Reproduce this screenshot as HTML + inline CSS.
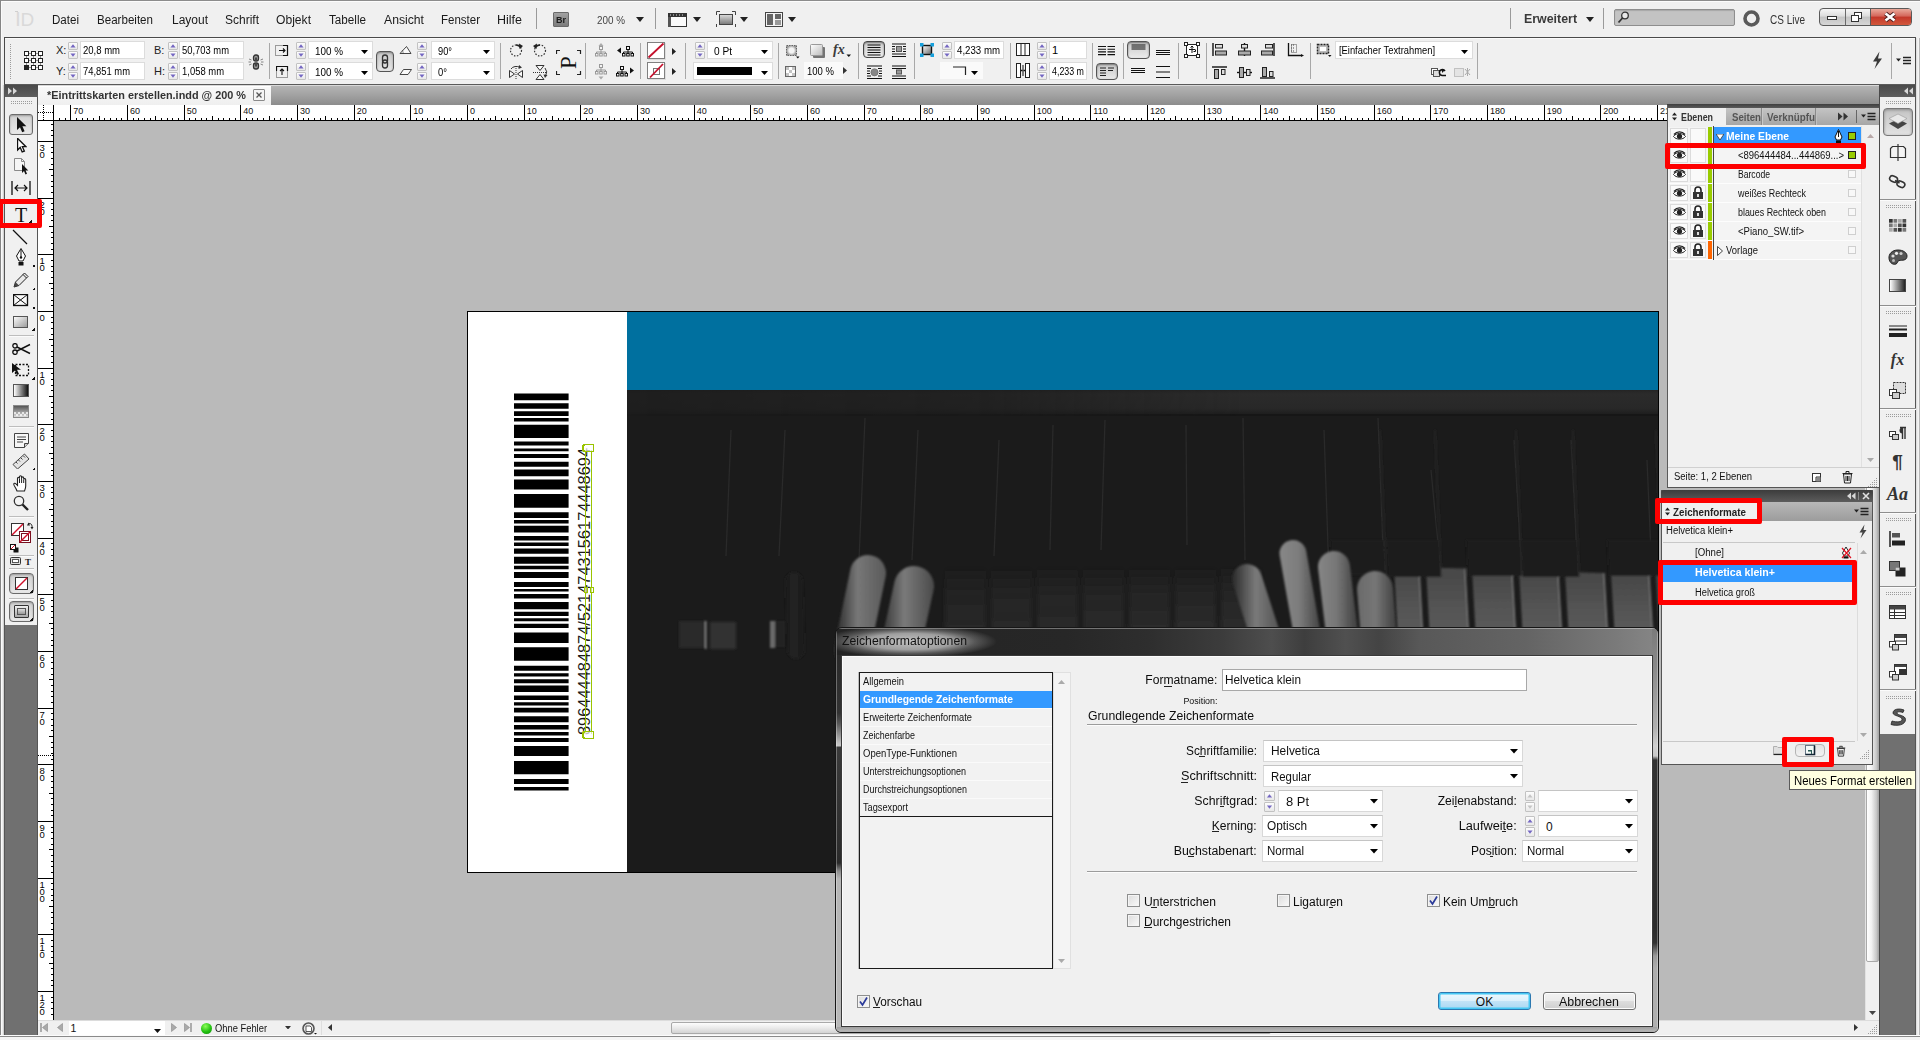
<!DOCTYPE html><html><head><meta charset="utf-8"><title>InDesign</title><style>
html,body{margin:0;padding:0;overflow:hidden;}
html{width:1920px;height:1040px;}
body{width:1920px;height:1040px;overflow:hidden;position:relative;background:#f0f0f0;font-family:"Liberation Sans",sans-serif;}
div,svg{position:absolute;}
.t{white-space:nowrap;}
</style></head><body>
<div style="left:0px;top:0px;width:1920px;height:37px;background:#f0f0f0;"></div>
<div class="t" style="left:52.00px;top:11.50px;line-height:16px;font-size:12px;color:#1a1a1a;transform:scaleX(0.9638);transform-origin:left center;">Datei</div>
<div class="t" style="left:97.00px;top:11.50px;line-height:16px;font-size:12px;color:#1a1a1a;transform:scaleX(0.9648);transform-origin:left center;">Bearbeiten</div>
<div class="t" style="left:172.00px;top:11.50px;line-height:16px;font-size:12px;color:#1a1a1a;transform:scaleX(0.9992);transform-origin:left center;">Layout</div>
<div class="t" style="left:225.00px;top:11.50px;line-height:16px;font-size:12px;color:#1a1a1a;transform:scaleX(0.9998);transform-origin:left center;">Schrift</div>
<div class="t" style="left:276.00px;top:11.50px;line-height:16px;font-size:12px;color:#1a1a1a;transform:scaleX(1.0092);transform-origin:left center;">Objekt</div>
<div class="t" style="left:329.00px;top:11.50px;line-height:16px;font-size:12px;color:#1a1a1a;transform:scaleX(0.9730);transform-origin:left center;">Tabelle</div>
<div class="t" style="left:384.00px;top:11.50px;line-height:16px;font-size:12px;color:#1a1a1a;transform:scaleX(1.0165);transform-origin:left center;">Ansicht</div>
<div class="t" style="left:441.00px;top:11.50px;line-height:16px;font-size:12px;color:#1a1a1a;transform:scaleX(0.9587);transform-origin:left center;">Fenster</div>
<div class="t" style="left:497.00px;top:11.50px;line-height:16px;font-size:12px;color:#1a1a1a;transform:scaleX(1.0414);transform-origin:left center;">Hilfe</div>
<div class="t" style="left:15.00px;top:8.00px;line-height:22px;font-size:21px;color:#d9d9d9;">I</div>
<div class="t" style="left:20.50px;top:8.50px;line-height:22px;font-size:19px;color:#d9d9d9;">D</div>
<div style="left:15px;top:11px;width:3px;height:1px;background:#cfcfcf;"></div>
<div style="left:536px;top:8px;width:1px;height:21px;background:#9a9a9a;"></div>
<div style="left:553px;top:12px;width:16px;height:15px;background:linear-gradient(#a2a2a2,#7c7c7c);border-radius:1px;border:1px solid #6a6a6a;box-sizing:border-box;"></div>
<div class="t" style="left:556.00px;top:12.00px;line-height:16px;font-size:9px;color:#1c1c1c;transform:scaleX(0.9998);transform-origin:left center;font-weight:bold;">Br</div>
<div class="t" style="left:597.00px;top:11.50px;line-height:16px;font-size:11px;color:#444;transform:scaleX(0.8977);transform-origin:left center;">200 %</div>
<svg style="left:635.5px;top:17.0px;" width="8" height="5" viewBox="0 0 8 5"><path d="M0 0H8L4.0 5Z" fill="#222"/></svg>
<div style="left:655px;top:8px;width:1px;height:21px;background:#9a9a9a;"></div>
<svg style="left:668px;top:11px;" width="20" height="16" viewBox="0 0 20 16"><rect x="0.5" y="2.5" width="18" height="13" fill="#fafafa" stroke="#333"/><rect x="0" y="2" width="19" height="4" fill="#333"/><path d="M2 4h1M5 4h1M8 4h1M11 4h1M14 4h1" stroke="#ddd"/><rect x="0" y="6" width="3" height="10" fill="#555"/></svg>
<svg style="left:693.0px;top:17.0px;" width="8" height="5" viewBox="0 0 8 5"><path d="M0 0H8L4.0 5Z" fill="#222"/></svg>
<svg style="left:716px;top:11px;" width="20" height="16" viewBox="0 0 20 16"><rect x="3.5" y="3.5" width="13" height="10" fill="url(#g1)" stroke="#444"/><defs><linearGradient id="g1" x1="0" y1="0" x2="0" y2="1"><stop offset="0" stop-color="#ddd"/><stop offset="1" stop-color="#777"/></linearGradient></defs><path d="M0.5 4V0.5H4M16 0.5h3.5V4M0.5 13v3.5H4M16 16.500h3.5V13" fill="none" stroke="#444"/></svg>
<svg style="left:740.0px;top:17.0px;" width="8" height="5" viewBox="0 0 8 5"><path d="M0 0H8L4.0 5Z" fill="#222"/></svg>
<svg style="left:765px;top:11px;" width="19" height="16" viewBox="0 0 19 16"><rect x="0.5" y="1.5" width="17" height="14" fill="#f4f4f4" stroke="#444"/><rect x="2" y="3" width="6" height="11" fill="#666"/><rect x="10" y="3" width="6" height="5" fill="#666"/><rect x="10" y="9" width="6" height="5" fill="#999"/></svg>
<svg style="left:788.0px;top:17.0px;" width="8" height="5" viewBox="0 0 8 5"><path d="M0 0H8L4.0 5Z" fill="#222"/></svg>
<div style="left:1510px;top:8px;width:1px;height:21px;background:#9a9a9a;"></div>
<div class="t" style="left:1524.00px;top:11.00px;line-height:16px;font-size:12px;color:#3a3a3a;transform:scaleX(1.0321);transform-origin:left center;font-weight:bold;">Erweitert</div>
<svg style="left:1585.5px;top:16.5px;" width="8" height="5" viewBox="0 0 8 5"><path d="M0 0H8L4.0 5Z" fill="#222"/></svg>
<div style="left:1603px;top:8px;width:1px;height:21px;background:#9a9a9a;"></div>
<div style="left:1614px;top:9px;width:121px;height:17px;background:#c3c3c3;border:1px solid #8e8e8e;box-sizing:border-box;border-radius:2px;box-shadow:inset 0 1px 1px #a8a8a8;"></div>
<svg style="left:1617px;top:10px;" width="14" height="14" viewBox="0 0 14 14"><circle cx="8" cy="5.500" r="3.3" fill="#e8e8e8" stroke="#333" stroke-width="1.3"/><path d="M5.500 8L1.500 12.500" stroke="#333" stroke-width="1.800"/></svg>
<svg style="left:1742px;top:9px;" width="19" height="19" viewBox="0 0 19 19"><circle cx="9.500" cy="9.500" r="6.500" fill="none" stroke="#5a5a5a" stroke-width="3.600"/></svg>
<div class="t" style="left:1770.00px;top:11.50px;line-height:16px;font-size:12px;color:#333;transform:scaleX(0.8330);transform-origin:left center;">CS Live</div>
<div style="left:1819px;top:8px;width:93px;height:18px;border:1px solid #5a5a5a;box-sizing:border-box;border-radius:4px;background:linear-gradient(#f6f6f6,#dcdcdc 45%,#c4c4c4 50%,#d6d6d6);overflow:hidden;"><div style="left:50px;top:0;width:42px;height:16px;background:linear-gradient(#e9a99b,#d4665a 45%,#c3372a 50%,#d2583c);border-left:1px solid #5a5a5a;"></div><div style="left:24.500px;top:0;width:1px;height:16px;background:#6a6a6a;"></div></div>
<svg style="left:1819px;top:8px;" width="93" height="18" viewBox="0 0 93 18"><rect x="8.500" y="8.500" width="9" height="3" fill="#fff" stroke="#333"/><rect x="35.500" y="4.500" width="7" height="6" fill="#fff" stroke="#333"/><rect x="32.500" y="7.500" width="7" height="6" fill="#fff" stroke="#333"/><path d="M66.500 5.500L75.500 12.500M75.500 5.500L66.500 12.500" stroke="#4a2020" stroke-width="4.500"/><path d="M66.500 5.500L75.500 12.500M75.500 5.500L66.500 12.500" stroke="#fff" stroke-width="2.600"/></svg>
<div style="left:0px;top:0px;width:1920px;height:1px;background:#8c8c8c;"></div>
<div style="left:0px;top:1px;width:1920px;height:1px;background:#fcfcfc;"></div>
<div style="left:0px;top:0px;width:1px;height:1040px;background:#858585;"></div>
<div style="left:1px;top:1px;width:1px;height:1040px;background:#fafafa;"></div>
<div style="left:4px;top:37px;width:1912px;height:48px;background:#f0f0f0;border:1px solid #4a4a4a;border-bottom:1px solid #5a5a5a;box-sizing:border-box;"></div>
<div style="left:5px;top:38px;width:1910px;height:1px;background:#fbfbfb;"></div>
<div style="left:9px;top:44px;width:3px;height:35px;background-image:conic-gradient(#9c9c9c 25%,transparent 0);background-size:2px 2px;"></div>
<svg style="left:24px;top:51px;" width="20" height="20" viewBox="0 0 20 20"><path d="M2.500 2.500H16.500V16.500H2.500ZM2.500 9.500H16.500M9.500 2.500V16.500" stroke="#777" fill="none" stroke-width="0.800"/><rect x="0.5" y="0.5" width="4" height="4" fill="#fff" stroke="#222"/><rect x="7.5" y="0.5" width="4" height="4" fill="#fff" stroke="#222"/><rect x="14.5" y="0.5" width="4" height="4" fill="#fff" stroke="#222"/><rect x="0.5" y="7.5" width="4" height="4" fill="#fff" stroke="#222"/><rect x="7.5" y="7.5" width="4" height="4" fill="#fff" stroke="#222"/><rect x="14.5" y="7.5" width="4" height="4" fill="#fff" stroke="#222"/><rect x="0.5" y="14.5" width="4" height="4" fill="#222" stroke="#222"/><rect x="7.5" y="14.5" width="4" height="4" fill="#fff" stroke="#222"/><rect x="14.5" y="14.5" width="4" height="4" fill="#fff" stroke="#222"/></svg>
<div class="t" style="left:56.00px;top:42.00px;line-height:16px;font-size:11px;color:#222;">X:</div>
<div class="t" style="left:56.00px;top:63.00px;line-height:16px;font-size:11px;color:#222;">Y:</div>
<div style="left:68px;top:42.0px;width:10px;height:8.0px;background:linear-gradient(#fdfdfd,#e8e8e8);border:1px solid #c2c2c2;box-sizing:border-box;border-radius:1px;"></div>
<div style="left:68px;top:50.5px;width:10px;height:8.0px;background:linear-gradient(#fdfdfd,#e8e8e8);border:1px solid #c2c2c2;box-sizing:border-box;border-radius:1px;"></div>
<svg style="left:68px;top:42px;" width="10" height="17" viewBox="0 0 10 17"><path d="M5.0 2.25L7.6 5.55H2.4Z" fill="#7466c2"/><path d="M5.0 14.75L7.6 11.45H2.4Z" fill="#7466c2"/></svg>
<div style="left:68px;top:63.0px;width:10px;height:8.0px;background:linear-gradient(#fdfdfd,#e8e8e8);border:1px solid #c2c2c2;box-sizing:border-box;border-radius:1px;"></div>
<div style="left:68px;top:71.5px;width:10px;height:8.0px;background:linear-gradient(#fdfdfd,#e8e8e8);border:1px solid #c2c2c2;box-sizing:border-box;border-radius:1px;"></div>
<svg style="left:68px;top:63px;" width="10" height="17" viewBox="0 0 10 17"><path d="M5.0 2.25L7.6 5.55H2.4Z" fill="#7466c2"/><path d="M5.0 14.75L7.6 11.45H2.4Z" fill="#7466c2"/></svg>
<div style="left:80px;top:41px;width:65px;height:18px;background:#fff;border:1px solid #dcdcdc;box-sizing:border-box;"></div>
<div style="left:80px;top:62px;width:65px;height:18px;background:#fff;border:1px solid #dcdcdc;box-sizing:border-box;"></div>
<div class="t" style="left:83.00px;top:42.00px;line-height:16px;font-size:10.5px;color:#000;transform:scaleX(0.9058);transform-origin:left center;">20,8 mm</div>
<div class="t" style="left:83.00px;top:63.00px;line-height:16px;font-size:10.5px;color:#000;transform:scaleX(0.8948);transform-origin:left center;">74,851 mm</div>
<div class="t" style="left:154.00px;top:42.00px;line-height:16px;font-size:11px;color:#222;">B:</div>
<div class="t" style="left:154.00px;top:63.00px;line-height:16px;font-size:11px;color:#222;">H:</div>
<div style="left:167.5px;top:42.0px;width:10px;height:8.0px;background:linear-gradient(#fdfdfd,#e8e8e8);border:1px solid #c2c2c2;box-sizing:border-box;border-radius:1px;"></div>
<div style="left:167.5px;top:50.5px;width:10px;height:8.0px;background:linear-gradient(#fdfdfd,#e8e8e8);border:1px solid #c2c2c2;box-sizing:border-box;border-radius:1px;"></div>
<svg style="left:167.5px;top:42px;" width="10" height="17" viewBox="0 0 10 17"><path d="M5.0 2.25L7.6 5.55H2.4Z" fill="#7466c2"/><path d="M5.0 14.75L7.6 11.45H2.4Z" fill="#7466c2"/></svg>
<div style="left:167.5px;top:63.0px;width:10px;height:8.0px;background:linear-gradient(#fdfdfd,#e8e8e8);border:1px solid #c2c2c2;box-sizing:border-box;border-radius:1px;"></div>
<div style="left:167.5px;top:71.5px;width:10px;height:8.0px;background:linear-gradient(#fdfdfd,#e8e8e8);border:1px solid #c2c2c2;box-sizing:border-box;border-radius:1px;"></div>
<svg style="left:167.5px;top:63px;" width="10" height="17" viewBox="0 0 10 17"><path d="M5.0 2.25L7.6 5.55H2.4Z" fill="#7466c2"/><path d="M5.0 14.75L7.6 11.45H2.4Z" fill="#7466c2"/></svg>
<div style="left:179px;top:41px;width:65px;height:18px;background:#fff;border:1px solid #dcdcdc;box-sizing:border-box;"></div>
<div style="left:179px;top:62px;width:65px;height:18px;background:#fff;border:1px solid #dcdcdc;box-sizing:border-box;"></div>
<div class="t" style="left:182.00px;top:42.00px;line-height:16px;font-size:10.5px;color:#000;transform:scaleX(0.8948);transform-origin:left center;">50,703 mm</div>
<div class="t" style="left:182.00px;top:63.00px;line-height:16px;font-size:10.5px;color:#000;transform:scaleX(0.8996);transform-origin:left center;">1,058 mm</div>
<svg style="left:248px;top:54px;" width="16" height="16" viewBox="0 0 16 16"><g stroke="#333" fill="#999" stroke-width="1.300"><rect x="5.500" y="1" width="5" height="6" rx="2.200"/><rect x="5.500" y="9" width="5" height="6" rx="2.200"/><path d="M8 3.500V6M8 10V12.500" stroke-width="1.600"/></g><path d="M1 5l2.500 1M1 11l2.500-1M15 5l-2.500 1M15 11l-2.500-1M0.500 8H3M13 8h2.500" stroke="#777" stroke-width="0.900"/></svg>
<div style="left:269px;top:43px;width:1px;height:36px;background:#a8a8a8;"></div>
<svg style="left:275px;top:45px;" width="14" height="12" viewBox="0 0 14 12"><rect x="0.500" y="0.500" width="12" height="10" fill="none" stroke="#444" stroke-dasharray="1 1"/><path d="M8 0.500H12.500V10.500H8" fill="none" stroke="#111" stroke-width="1.200"/><path d="M4 5.500H10M8 3.500L10 5.500L8 7.500" stroke="#111" fill="none" stroke-width="1.100"/></svg>
<svg style="left:276px;top:66px;" width="14" height="13" viewBox="0 0 14 13"><rect x="0.500" y="0.500" width="11" height="11" fill="none" stroke="#444" stroke-dasharray="1 1"/><path d="M0.500 5V0.500H11.500V5" fill="none" stroke="#111" stroke-width="1.200"/><path d="M6 9V3M4 5L6 3L8 5" stroke="#111" fill="none" stroke-width="1.100"/></svg>
<div style="left:296px;top:42.0px;width:10px;height:8.0px;background:linear-gradient(#fdfdfd,#e8e8e8);border:1px solid #c2c2c2;box-sizing:border-box;border-radius:1px;"></div>
<div style="left:296px;top:50.5px;width:10px;height:8.0px;background:linear-gradient(#fdfdfd,#e8e8e8);border:1px solid #c2c2c2;box-sizing:border-box;border-radius:1px;"></div>
<svg style="left:296px;top:42px;" width="10" height="17" viewBox="0 0 10 17"><path d="M5.0 2.25L7.6 5.55H2.4Z" fill="#7466c2"/><path d="M5.0 14.75L7.6 11.45H2.4Z" fill="#7466c2"/></svg>
<div style="left:296px;top:63.0px;width:10px;height:8.0px;background:linear-gradient(#fdfdfd,#e8e8e8);border:1px solid #c2c2c2;box-sizing:border-box;border-radius:1px;"></div>
<div style="left:296px;top:71.5px;width:10px;height:8.0px;background:linear-gradient(#fdfdfd,#e8e8e8);border:1px solid #c2c2c2;box-sizing:border-box;border-radius:1px;"></div>
<svg style="left:296px;top:63px;" width="10" height="17" viewBox="0 0 10 17"><path d="M5.0 2.25L7.6 5.55H2.4Z" fill="#7466c2"/><path d="M5.0 14.75L7.6 11.45H2.4Z" fill="#7466c2"/></svg>
<div style="left:308px;top:41px;width:65px;height:18px;background:#fff;border:1px solid #dcdcdc;box-sizing:border-box;"></div>
<div style="left:308px;top:62px;width:65px;height:18px;background:#fff;border:1px solid #dcdcdc;box-sizing:border-box;"></div>
<div class="t" style="left:315.00px;top:42.50px;line-height:16px;font-size:10.5px;color:#000;transform:scaleX(0.9404);transform-origin:left center;">100 %</div>
<div class="t" style="left:315.00px;top:63.50px;line-height:16px;font-size:10.5px;color:#000;transform:scaleX(0.9404);transform-origin:left center;">100 %</div>
<svg style="left:360.5px;top:49.5px;" width="7" height="4" viewBox="0 0 7 4"><path d="M0 0H7L3.5 4Z" fill="#000"/></svg>
<svg style="left:360.5px;top:70.5px;" width="7" height="4" viewBox="0 0 7 4"><path d="M0 0H7L3.5 4Z" fill="#000"/></svg>
<div style="left:376px;top:51px;width:18px;height:21px;border:1px solid #555;border-radius:4px;background:linear-gradient(#c8c8c8,#e6e6e6);box-sizing:border-box;box-shadow:inset 0 1px 2px #888;"></div>
<svg style="left:376px;top:51px;" width="18" height="21" viewBox="0 0 18 21"><g stroke="#333" fill="none" stroke-width="1.300"><rect x="6.500" y="4" width="5" height="8" rx="2.500"/><rect x="6.500" y="9" width="5" height="8" rx="2.500"/></g></svg>
<svg style="left:399px;top:45px;" width="14" height="10" viewBox="0 0 14 10"><path d="M1 8.500H12L7.500 1.500Z" fill="#fafafa" stroke="#333" stroke-width="0.900"/><path d="M4 8.500A4 4 0 0 0 3 5" stroke="#333" fill="none" stroke-dasharray="1 1"/></svg>
<svg style="left:399px;top:68px;" width="14" height="8" viewBox="0 0 14 8"><path d="M1 6.500H9L12.500 1.500H4.500Z" fill="#fafafa" stroke="#333" stroke-width="0.900"/></svg>
<div style="left:417px;top:42.0px;width:10px;height:8.0px;background:linear-gradient(#fdfdfd,#e8e8e8);border:1px solid #c2c2c2;box-sizing:border-box;border-radius:1px;"></div>
<div style="left:417px;top:50.5px;width:10px;height:8.0px;background:linear-gradient(#fdfdfd,#e8e8e8);border:1px solid #c2c2c2;box-sizing:border-box;border-radius:1px;"></div>
<svg style="left:417px;top:42px;" width="10" height="17" viewBox="0 0 10 17"><path d="M5.0 2.25L7.6 5.55H2.4Z" fill="#7466c2"/><path d="M5.0 14.75L7.6 11.45H2.4Z" fill="#7466c2"/></svg>
<div style="left:417px;top:63.0px;width:10px;height:8.0px;background:linear-gradient(#fdfdfd,#e8e8e8);border:1px solid #c2c2c2;box-sizing:border-box;border-radius:1px;"></div>
<div style="left:417px;top:71.5px;width:10px;height:8.0px;background:linear-gradient(#fdfdfd,#e8e8e8);border:1px solid #c2c2c2;box-sizing:border-box;border-radius:1px;"></div>
<svg style="left:417px;top:63px;" width="10" height="17" viewBox="0 0 10 17"><path d="M5.0 2.25L7.6 5.55H2.4Z" fill="#7466c2"/><path d="M5.0 14.75L7.6 11.45H2.4Z" fill="#7466c2"/></svg>
<div style="left:431px;top:41px;width:64px;height:18px;background:#fff;border:1px solid #dcdcdc;box-sizing:border-box;"></div>
<div style="left:431px;top:62px;width:64px;height:18px;background:#fff;border:1px solid #dcdcdc;box-sizing:border-box;"></div>
<div class="t" style="left:438.00px;top:42.50px;line-height:16px;font-size:10.5px;color:#000;transform:scaleX(0.8817);transform-origin:left center;">90°</div>
<div class="t" style="left:438.00px;top:63.50px;line-height:16px;font-size:10.5px;color:#000;transform:scaleX(0.8965);transform-origin:left center;">0°</div>
<svg style="left:483.0px;top:49.5px;" width="7" height="4" viewBox="0 0 7 4"><path d="M0 0H7L3.5 4Z" fill="#000"/></svg>
<svg style="left:483.0px;top:70.5px;" width="7" height="4" viewBox="0 0 7 4"><path d="M0 0H7L3.5 4Z" fill="#000"/></svg>
<div style="left:500px;top:43px;width:1px;height:36px;background:#a8a8a8;"></div>
<svg style="left:508px;top:42px;" width="16" height="16" viewBox="0 0 16 16"><circle cx="8" cy="8.500" r="5.500" fill="none" stroke="#333" stroke-width="1.200" stroke-dasharray="1.500 1.500"/><path d="M8 3A5.500 5.500 0 0 1 13 6" fill="none" stroke="#222" stroke-width="1.400"/><path d="M11 1.500L15 4L11.500 7Z" fill="#222"/></svg>
<svg style="left:532px;top:42px;" width="16" height="16" viewBox="0 0 16 16"><circle cx="8" cy="8.500" r="5.500" fill="none" stroke="#333" stroke-width="1.200" stroke-dasharray="1.500 1.500"/><path d="M8 3A5.500 5.500 0 0 0 3 6" fill="none" stroke="#222" stroke-width="1.400"/><path d="M5 1.500L1 4L4.500 7Z" fill="#222"/></svg>
<svg style="left:508px;top:64px;" width="17" height="16" viewBox="0 0 17 16"><path d="M1.500 6.500L6.500 10L1.500 13.500Z" fill="#fafafa" stroke="#333"/><path d="M14.500 6.500L9.500 10L14.500 13.500Z" fill="#fafafa" stroke="#333"/><path d="M8 2V15" stroke="#333" stroke-dasharray="1 1"/><path d="M3 5A6 5 0 0 1 12 3.500" fill="none" stroke="#333"/><path d="M11 1l3 2.500l-3.500 1.500z" fill="#333"/></svg>
<svg style="left:532px;top:64px;" width="17" height="17" viewBox="0 0 17 17"><path d="M4 1.500L8 6.500L12 1.500Z" fill="#fafafa" stroke="#333"/><path d="M4 15.500L8 10.500L12 15.500Z" fill="#fafafa" stroke="#333"/><path d="M1 8.500H15" stroke="#333" stroke-dasharray="1 1"/><path d="M13 4A5 6 0 0 1 13.500 12" fill="none" stroke="#333"/><path d="M15.500 11l-2.500 3l-1.500-3.500z" fill="#333"/></svg>
<svg style="left:556px;top:50px;" width="26" height="26" viewBox="0 0 26 26"><path d="M0.500 4V0.500H4M21 0.500h3.500V4M0.500 21v3.500H4M21 24.500h3.500V21" fill="none" stroke="#222" stroke-width="1.200"/><g transform="translate(12.500,12.500) rotate(-90)"><text x="0" y="7.500" font-family="Liberation Serif" font-size="23" text-anchor="middle" fill="#111">P</text></g></svg>
<div style="left:585px;top:43px;width:1px;height:36px;background:#a8a8a8;"></div>
<svg style="left:595px;top:43px;" width="13" height="16" viewBox="0 0 13 16"><g stroke="#999" fill="none"><rect x="4.500" y="3.500" width="3" height="3" fill="#f4f4f4"/><path d="M6 6.500V9M1.500 11V9H10.500V11M6 9V11"/><rect x="0.500" y="10.500" width="2.500" height="2.500" fill="#f4f4f4"/><rect x="4.700" y="10.500" width="2.500" height="2.500" fill="#f4f4f4"/><rect x="9" y="10.500" width="2.500" height="2.500" fill="#f4f4f4"/></g><path d="M3.500 3L6 0L8.500 3Z" fill="#aaa"/></svg>
<svg style="left:595px;top:63px;" width="13" height="18" viewBox="0 0 13 18"><g transform="translate(0,-2)"><g stroke="#999" fill="none"><rect x="4.500" y="3.500" width="3" height="3" fill="#f4f4f4"/><path d="M6 6.500V9M1.500 11V9H10.500V11M6 9V11"/><rect x="0.500" y="10.500" width="2.500" height="2.500" fill="#f4f4f4"/><rect x="4.700" y="10.500" width="2.500" height="2.500" fill="#f4f4f4"/><rect x="9" y="10.500" width="2.500" height="2.500" fill="#f4f4f4"/></g></g><path d="M3.500 13.500L6 16.500L8.500 13.500Z" fill="#aaa"/></svg>
<svg style="left:616px;top:43px;" width="19" height="16" viewBox="0 0 19 16"><g transform="translate(6,0)"><g stroke="#111" fill="none"><rect x="4.500" y="3.500" width="3" height="3" fill="#f4f4f4"/><path d="M6 6.500V9M1.500 11V9H10.500V11M6 9V11"/><rect x="0.500" y="10.500" width="2.500" height="2.500" fill="#f4f4f4"/><rect x="4.700" y="10.500" width="2.500" height="2.500" fill="#f4f4f4"/><rect x="9" y="10.500" width="2.500" height="2.500" fill="#f4f4f4"/></g></g><path d="M5 4.500L1 7.500L5 10.500Z" fill="#111"/></svg>
<svg style="left:616px;top:63px;" width="19" height="16" viewBox="0 0 19 16"><g transform="translate(0,0)"><g stroke="#111" fill="none"><rect x="4.500" y="3.500" width="3" height="3" fill="#f4f4f4"/><path d="M6 6.500V9M1.500 11V9H10.500V11M6 9V11"/><rect x="0.500" y="10.500" width="2.500" height="2.500" fill="#f4f4f4"/><rect x="4.700" y="10.500" width="2.500" height="2.500" fill="#f4f4f4"/><rect x="9" y="10.500" width="2.500" height="2.500" fill="#f4f4f4"/></g></g><path d="M14 4.500L18 7.500L14 10.500Z" fill="#111"/></svg>
<div style="left:640px;top:43px;width:1px;height:36px;background:#a8a8a8;"></div>
<div style="left:647px;top:42px;width:18px;height:17px;background:#fff;border:1px solid #808080;box-sizing:border-box;box-shadow:1px 1px 0 #ddd;"></div>
<div style="left:647px;top:62px;width:18px;height:17px;background:#fff;border:1px solid #808080;box-sizing:border-box;box-shadow:1px 1px 0 #ddd;"></div>
<svg style="left:647px;top:42px;" width="18" height="17" viewBox="0 0 18 17"><path d="M1.500 15.500L16.500 1.500" stroke="#c4102c" stroke-width="1.800"/></svg>
<svg style="left:647px;top:62px;" width="18" height="17" viewBox="0 0 18 17"><rect x="6.500" y="6.500" width="6" height="6" fill="none" stroke="#777"/><path d="M3 15.500L16 2" stroke="#c4102c" stroke-width="1.800"/></svg>
<svg style="left:672.0px;top:47.5px;" width="4" height="7" viewBox="0 0 4 7"><path d="M0 0V7L4 3.5Z" fill="#222"/></svg>
<svg style="left:672.0px;top:67.5px;" width="4" height="7" viewBox="0 0 4 7"><path d="M0 0V7L4 3.5Z" fill="#222"/></svg>
<div style="left:685px;top:43px;width:1px;height:36px;background:#a8a8a8;"></div>
<div style="left:695px;top:42.0px;width:10px;height:8.0px;background:linear-gradient(#fdfdfd,#e8e8e8);border:1px solid #c2c2c2;box-sizing:border-box;border-radius:1px;"></div>
<div style="left:695px;top:50.5px;width:10px;height:8.0px;background:linear-gradient(#fdfdfd,#e8e8e8);border:1px solid #c2c2c2;box-sizing:border-box;border-radius:1px;"></div>
<svg style="left:695px;top:42px;" width="10" height="17" viewBox="0 0 10 17"><path d="M5.0 2.25L7.6 5.55H2.4Z" fill="#7466c2"/><path d="M5.0 14.75L7.6 11.45H2.4Z" fill="#7466c2"/></svg>
<div style="left:707px;top:41px;width:66px;height:18px;background:#fff;border:1px solid #dcdcdc;box-sizing:border-box;"></div>
<div style="left:693px;top:62px;width:80px;height:18px;background:#fff;border:1px solid #dcdcdc;box-sizing:border-box;"></div>
<div class="t" style="left:714.00px;top:42.50px;line-height:16px;font-size:10.5px;color:#000;transform:scaleX(0.9636);transform-origin:left center;">0 Pt</div>
<svg style="left:761.0px;top:49.5px;" width="7" height="4" viewBox="0 0 7 4"><path d="M0 0H7L3.5 4Z" fill="#000"/></svg>
<svg style="left:761.0px;top:70.5px;" width="7" height="4" viewBox="0 0 7 4"><path d="M0 0H7L3.5 4Z" fill="#000"/></svg>
<div style="left:697px;top:67px;width:55px;height:8px;background:#000;"></div>
<div style="left:778px;top:43px;width:1px;height:36px;background:#a8a8a8;"></div>
<svg style="left:785px;top:44px;" width="16" height="15" viewBox="0 0 16 15"><defs><radialGradient id="ds"><stop offset="0.500" stop-color="#f4f4f4"/><stop offset="1" stop-color="#999"/></radialGradient></defs><rect x="1.500" y="1.500" width="10" height="10" fill="url(#ds)" stroke="#666" stroke-dasharray="1.500 1"/><path d="M11 12.500h3.500l-1.700 2z" fill="#111"/></svg>
<svg style="left:810px;top:44px;" width="16" height="15" viewBox="0 0 16 15"><defs><linearGradient id="sh" x1="0" y1="0" x2="1" y2="1"><stop offset="0" stop-color="#fff"/><stop offset="1" stop-color="#bbb"/></linearGradient></defs><rect x="3" y="3" width="12" height="11" rx="1" fill="#555" opacity="0.800"/><rect x="0.500" y="0.500" width="12" height="11" rx="1" fill="url(#sh)" stroke="#999"/></svg>
<div class="t" style="left:833.00px;top:41.50px;line-height:16px;font-size:14px;color:#3a3a3a;font-weight:bold;font-style:italic;font-family:'Liberation Serif',serif;">fx</div>
<svg style="left:846px;top:54px;" width="6" height="4" viewBox="0 0 6 4"><path d="M0.500 0.500h4.500l-2.200 2.500z" fill="#111"/></svg>
<svg style="left:785px;top:66px;" width="12" height="12" viewBox="0 0 12 12"><rect x="0.500" y="0.500" width="10" height="10" fill="#fff" stroke="#666"/><path d="M1 1h3v3H1zM7 1h3v3H7zM4 4H7V7H4zM1 7h3v3H1zM7 7h3v3H7z" fill="#c4c4c4"/></svg>
<div style="left:804px;top:62px;width:39px;height:17px;background:#fafafa;"></div>
<div class="t" style="left:807.00px;top:62.50px;line-height:16px;font-size:10.5px;color:#000;transform:scaleX(0.9068);transform-origin:left center;">100 %</div>
<svg style="left:843.0px;top:67.0px;" width="4" height="7" viewBox="0 0 4 7"><path d="M0 0V7L4 3.5Z" fill="#333"/></svg>
<div style="left:858px;top:43px;width:1px;height:36px;background:#a8a8a8;"></div>
<div style="left:863px;top:41px;width:22px;height:17px;border:1px solid #444;border-radius:4px;box-sizing:border-box;background:linear-gradient(#cfcfcf,#ededed);box-shadow:inset 0 1px 2px #777;"></div>
<svg style="left:863px;top:41px;" width="22" height="17" viewBox="0 0 22 17"><path d="M4.500 4h13M4.500 6.500h13M4.500 9h13M4.500 11.500h13M4.500 14h13" stroke="#111" stroke-width="1.200"/></svg>
<svg style="left:892px;top:43px;" width="15" height="14" viewBox="0 0 15 14"><path d="M0 1h14M0 3.500h3M11 3.500h3M0 6h3M11 6h3M0 8.500h3M11 8.500h3M0 11h14M0 13.500h14" stroke="#111" stroke-width="1.100"/><rect x="4.500" y="3.500" width="5" height="5" fill="#999" stroke="#555"/></svg>
<svg style="left:867px;top:65px;" width="16" height="14" viewBox="0 0 16 14"><path d="M0 1h15M0 3.500h4M11 3.500h4M0 6h3M12 6h3M0 8.500h3M12 8.500h3M0 11h4M11 11h4M0 13.500h15" stroke="#111" stroke-width="1.100"/><circle cx="7.500" cy="7.300" r="3.600" fill="#888" stroke="#666" stroke-width="0.600"/></svg>
<svg style="left:892px;top:65px;" width="15" height="14" viewBox="0 0 15 14"><path d="M0 1h14M0 3.500h14M0 11h14M0 13.500h14" stroke="#111" stroke-width="1.100"/><rect x="4.500" y="5" width="5" height="4" fill="#999" stroke="#555"/></svg>
<div style="left:914px;top:43px;width:1px;height:36px;background:#a8a8a8;"></div>
<svg style="left:919px;top:42px;" width="17" height="17" viewBox="0 0 17 17"><defs><linearGradient id="co" x1="0" y1="0" x2="1" y2="1"><stop offset="0" stop-color="#fff"/><stop offset="1" stop-color="#666"/></linearGradient></defs><rect x="3.500" y="3.500" width="9" height="9" fill="url(#co)" stroke="#111" stroke-width="1.400"/><path d="M1 1h3.500v3.500H1zM11.500 1H15v3.500h-3.500zM1 11.500h3.500V15H1zM11.500 11.500H15V15h-3.500z" fill="#16a0dc"/></svg>
<div style="left:942px;top:42.0px;width:10px;height:8.0px;background:linear-gradient(#fdfdfd,#e8e8e8);border:1px solid #c2c2c2;box-sizing:border-box;border-radius:1px;"></div>
<div style="left:942px;top:50.5px;width:10px;height:8.0px;background:linear-gradient(#fdfdfd,#e8e8e8);border:1px solid #c2c2c2;box-sizing:border-box;border-radius:1px;"></div>
<svg style="left:942px;top:42px;" width="10" height="17" viewBox="0 0 10 17"><path d="M5.0 2.25L7.6 5.55H2.4Z" fill="#7466c2"/><path d="M5.0 14.75L7.6 11.45H2.4Z" fill="#7466c2"/></svg>
<div style="left:954px;top:41px;width:50px;height:18px;background:#fff;border:1px solid #dcdcdc;box-sizing:border-box;"></div>
<div class="t" style="left:957.00px;top:42.00px;line-height:16px;font-size:10.5px;color:#000;transform:scaleX(0.9210);transform-origin:left center;">4,233 mm</div>
<div style="left:940px;top:62px;width:43px;height:17px;background:#fafafa;"></div>
<svg style="left:953px;top:66px;" width="14" height="10" viewBox="0 0 14 10"><path d="M0 1H12.500V9" fill="none" stroke="#222" stroke-width="1.200"/></svg>
<svg style="left:971.0px;top:70.5px;" width="7" height="4" viewBox="0 0 7 4"><path d="M0 0H7L3.5 4Z" fill="#000"/></svg>
<div style="left:1010px;top:43px;width:1px;height:36px;background:#a8a8a8;"></div>
<svg style="left:1016px;top:43px;" width="15" height="14" viewBox="0 0 15 14"><rect x="0.500" y="0.500" width="13" height="12" fill="#fff" stroke="#222"/><path d="M5 0V13M9 0V13" stroke="#222"/></svg>
<svg style="left:1016px;top:63px;" width="15" height="16" viewBox="0 0 15 16"><rect x="0.500" y="0.500" width="4" height="14" fill="#fff" stroke="#222"/><rect x="9.500" y="0.500" width="4" height="14" fill="#fff" stroke="#222"/><path d="M5 7.500h1.500M9 7.500h-1.500" stroke="#111" stroke-width="1.500"/><path d="M7 2V13" stroke="#111"/></svg>
<div style="left:1037px;top:42.0px;width:10px;height:8.0px;background:linear-gradient(#fdfdfd,#e8e8e8);border:1px solid #c2c2c2;box-sizing:border-box;border-radius:1px;"></div>
<div style="left:1037px;top:50.5px;width:10px;height:8.0px;background:linear-gradient(#fdfdfd,#e8e8e8);border:1px solid #c2c2c2;box-sizing:border-box;border-radius:1px;"></div>
<svg style="left:1037px;top:42px;" width="10" height="17" viewBox="0 0 10 17"><path d="M5.0 2.25L7.6 5.55H2.4Z" fill="#7466c2"/><path d="M5.0 14.75L7.6 11.45H2.4Z" fill="#7466c2"/></svg>
<div style="left:1037px;top:63.0px;width:10px;height:8.0px;background:linear-gradient(#fdfdfd,#e8e8e8);border:1px solid #c2c2c2;box-sizing:border-box;border-radius:1px;"></div>
<div style="left:1037px;top:71.5px;width:10px;height:8.0px;background:linear-gradient(#fdfdfd,#e8e8e8);border:1px solid #c2c2c2;box-sizing:border-box;border-radius:1px;"></div>
<svg style="left:1037px;top:63px;" width="10" height="17" viewBox="0 0 10 17"><path d="M5.0 2.25L7.6 5.55H2.4Z" fill="#7466c2"/><path d="M5.0 14.75L7.6 11.45H2.4Z" fill="#7466c2"/></svg>
<div style="left:1049px;top:41px;width:38px;height:18px;background:#fff;border:1px solid #dcdcdc;box-sizing:border-box;"></div>
<div style="left:1049px;top:62px;width:38px;height:18px;background:#fff;border:1px solid #dcdcdc;box-sizing:border-box;"></div>
<div class="t" style="left:1052.00px;top:42.00px;line-height:16px;font-size:11px;color:#000;">1</div>
<div class="t" style="left:1052.00px;top:62.50px;line-height:16px;font-size:10.5px;color:#000;transform:scaleX(0.8434);transform-origin:left center;">4,233 m</div>
<div style="left:1092px;top:43px;width:1px;height:36px;background:#a8a8a8;"></div>
<svg style="left:1098px;top:45px;" width="18" height="11" viewBox="0 0 18 11"><path d="M0 1.500h17M0 4.200h17M0 6.900h17M0 9.600h17" stroke="#111" stroke-width="1.100"/><rect x="8" y="0" width="1.500" height="11" fill="#f0f0f0"/></svg>
<div style="left:1096px;top:63px;width:22px;height:17px;border:1px solid #555;border-radius:4px;box-sizing:border-box;background:linear-gradient(#c8c8c8,#e8e8e8);box-shadow:inset 0 1px 2px #777;"></div>
<svg style="left:1096px;top:63px;" width="22" height="17" viewBox="0 0 22 17"><path d="M4 5h6M12 5h6M4 7.500h6M12 7.500h5M4 10h6M4 12.500h6" stroke="#222" stroke-width="1.100"/></svg>
<div style="left:1123px;top:43px;width:1px;height:36px;background:#a8a8a8;"></div>
<div style="left:1127px;top:41px;width:23px;height:18px;border:1px solid #555;border-radius:4px;box-sizing:border-box;background:linear-gradient(#c8c8c8,#ececec);box-shadow:inset 0 1px 2px #777;"></div>
<svg style="left:1127px;top:41px;" width="23" height="18" viewBox="0 0 23 18"><path d="M4.500 4h14M4.500 6h14M4.500 8h14" stroke="#111" stroke-width="1"/></svg>
<svg style="left:1156px;top:49px;" width="15" height="8" viewBox="0 0 15 8"><path d="M0 1.500h14M0 3.500h14M0 5.500h14" stroke="#111" stroke-width="1"/></svg>
<svg style="left:1131px;top:67px;" width="15" height="8" viewBox="0 0 15 8"><path d="M0 1.500h14M0 3.500h14M0 5.500h14" stroke="#111" stroke-width="1"/></svg>
<svg style="left:1156px;top:65px;" width="15" height="14" viewBox="0 0 15 14"><path d="M0 1.500h14M0 7h14M0 12.500h14" stroke="#111" stroke-width="1.100"/></svg>
<div style="left:1178px;top:43px;width:1px;height:36px;background:#a8a8a8;"></div>
<svg style="left:1184px;top:42px;" width="17" height="16" viewBox="0 0 17 16"><rect x="2.500" y="2.500" width="11" height="11" fill="#fff" stroke="#222"/><rect x="0.500" y="0.500" width="3" height="3" fill="#fff" stroke="#222"/><rect x="12.500" y="0.500" width="3" height="3" fill="#fff" stroke="#222"/><rect x="0.500" y="12.500" width="3" height="3" fill="#fff" stroke="#222"/><rect x="12.500" y="12.500" width="3" height="3" fill="#fff" stroke="#222"/><path d="M8 4v7M5 7.500h6M6.500 5.500L8 4l1.500 1.500M9.500 9.500h2v-2" stroke="#111" fill="none"/></svg>
<div style="left:1206px;top:43px;width:1px;height:36px;background:#a8a8a8;"></div>
<svg style="left:1212px;top:43px;" width="16" height="14" viewBox="0 0 16 14"><path d="M1 0V13" stroke="#111" stroke-width="1.400"/><rect x="3.500" y="1.500" width="7" height="3.500" fill="#ddd" stroke="#222"/><rect x="3.500" y="8" width="11" height="4" fill="#aaa" stroke="#222"/></svg>
<svg style="left:1237px;top:43px;" width="16" height="14" viewBox="0 0 16 14"><path d="M7.500 0V13" stroke="#111" stroke-width="1.400"/><rect x="4.500" y="1.500" width="6" height="3.500" fill="#ddd" stroke="#222"/><rect x="1.500" y="8" width="12" height="4" fill="#aaa" stroke="#222"/></svg>
<svg style="left:1260px;top:43px;" width="16" height="14" viewBox="0 0 16 14"><path d="M14 0V13" stroke="#111" stroke-width="1.400"/><rect x="5.500" y="1.500" width="7" height="3.500" fill="#ddd" stroke="#222"/><rect x="1.500" y="8" width="11" height="4" fill="#aaa" stroke="#222"/></svg>
<svg style="left:1212px;top:66px;" width="16" height="14" viewBox="0 0 16 14"><path d="M0 1H15" stroke="#111" stroke-width="1.400"/><rect x="2.500" y="3.500" width="4" height="9" fill="#aaa" stroke="#222"/><rect x="9.500" y="3.500" width="3.500" height="5" fill="#ddd" stroke="#222"/></svg>
<svg style="left:1237px;top:66px;" width="16" height="14" viewBox="0 0 16 14"><path d="M0 6.500H15" stroke="#111" stroke-width="1.400"/><rect x="2.500" y="1.500" width="4" height="10" fill="#aaa" stroke="#222"/><rect x="9.500" y="3.500" width="3.500" height="6" fill="#ddd" stroke="#222"/></svg>
<svg style="left:1260px;top:66px;" width="16" height="14" viewBox="0 0 16 14"><path d="M0 12H15" stroke="#111" stroke-width="1.400"/><rect x="2.500" y="1.500" width="4" height="9" fill="#aaa" stroke="#222"/><rect x="9.500" y="5.500" width="3.500" height="5" fill="#ddd" stroke="#222"/></svg>
<svg style="left:1287px;top:43px;" width="18" height="15" viewBox="0 0 18 15"><path d="M1.500 0V12.500H14" fill="none" stroke="#111" stroke-width="1.300"/><path d="M4 2h4M4 5h4M4 8h4M10 12.500h0" stroke="#444" stroke-dasharray="1 1"/><rect x="4.500" y="1.500" width="5" height="8" fill="none" stroke="#555" stroke-dasharray="1 1"/><path d="M14 11l3 1.500l-3 1.500z" fill="#111"/></svg>
<div style="left:1310px;top:43px;width:1px;height:36px;background:#a8a8a8;"></div>
<svg style="left:1316px;top:43px;" width="17" height="15" viewBox="0 0 17 15"><rect x="1.500" y="1.500" width="11" height="9" fill="#bbb" stroke="#222" stroke-dasharray="2 1" stroke-width="1.500"/><rect x="4" y="4" width="6" height="4" fill="#fff"/><path d="M12 12h3.500l-1.700 2z" fill="#111"/></svg>
<div style="left:1335px;top:41px;width:138px;height:18px;background:#fff;border:1px solid #dcdcdc;box-sizing:border-box;"></div>
<div class="t" style="left:1339.00px;top:42.00px;line-height:16px;font-size:10.5px;color:#000;transform:scaleX(0.8907);transform-origin:left center;">[Einfacher Textrahmen]</div>
<svg style="left:1461.0px;top:49.5px;" width="7" height="4" viewBox="0 0 7 4"><path d="M0 0H7L3.5 4Z" fill="#000"/></svg>
<svg style="left:1431px;top:67px;" width="18" height="11" viewBox="0 0 18 11"><rect x="0.500" y="1.500" width="6" height="6" fill="#fff" stroke="#555"/><rect x="2.500" y="3.500" width="6" height="6" fill="#ddd" stroke="#555"/><path d="M15 8.500H11.500M11.500 8.500A3 3 0 1 1 14 4" fill="none" stroke="#111" stroke-width="1.500"/><path d="M10 2l3.500 1l-2 3z" fill="#111"/></svg>
<svg style="left:1454px;top:67px;" width="18" height="11" viewBox="0 0 18 11"><rect x="0.500" y="1.500" width="9" height="8" fill="#e4e4e4" stroke="#999" stroke-dasharray="1 1"/><path d="M11 2l5 6M16 2l-5 6M13.500 1v8" stroke="#aaa"/></svg>
<div style="left:1477px;top:43px;width:1px;height:36px;background:#a8a8a8;"></div>
<svg style="left:1871px;top:51px;" width="13" height="19" viewBox="0 0 13 19"><path d="M8.500 0.500L2 10.500H6L3.500 18L11 7.500H7Z" fill="#3a3a3a"/></svg>
<div style="left:1891px;top:43px;width:1px;height:36px;background:#a8a8a8;"></div>
<svg style="left:1896px;top:56px;" width="16" height="9" viewBox="0 0 16 9"><path d="M0 2.500h5L2.500 5.500z" fill="#222"/><path d="M7 1.500h8M7 4.500h8M7 7.500h8" stroke="#222" stroke-width="1.300"/></svg>
<div style="left:5px;top:85px;width:1875px;height:20px;background:linear-gradient(#b6b6b6,#a4a4a4 45%,#8c8c8c);"></div>
<div style="left:5px;top:85px;width:1875px;height:1px;background:#d8d8d8;"></div>
<div style="left:5px;top:85px;width:33px;height:12px;background:linear-gradient(#4a4a4a,#5e5e5e);"></div>
<svg style="left:8px;top:87px;" width="10" height="8" viewBox="0 0 10 8"><path d="M0 0.500L4 4L0 7.500ZM5 0.500L9 4L5 7.500Z" fill="#d8d8d8"/></svg>
<div style="left:38px;top:86px;width:233px;height:19px;background:linear-gradient(#f8f8f8,#efefef);border-top:1px solid #fff;box-sizing:border-box;"></div>
<div class="t" style="left:47.00px;top:87.00px;line-height:16px;font-size:11px;color:#333;transform:scaleX(0.9878);transform-origin:left center;font-weight:bold;">*Eintrittskarten erstellen.indd @ 200 %</div>
<div style="left:253px;top:89px;width:12px;height:12px;border:1px solid #8a8a8a;box-sizing:border-box;background:#f4f4f4;border-radius:1px;"></div>
<svg style="left:253px;top:89px;" width="12" height="12" viewBox="0 0 12 12"><path d="M3.500 3.500L8.500 8.500M8.500 3.500L3.500 8.500" stroke="#555" stroke-width="1.300"/></svg>
<div style="left:38px;top:105px;width:1842px;height:930px;background:#bababa;"></div>
<div style="left:38px;top:105px;width:1629px;height:16px;background:#fff;"></div>
<div style="left:38px;top:105px;width:16px;height:917px;background:#fff;"></div>
<svg style="left:38px;top:105px;" width="1629" height="16" viewBox="0 0 1629 16"><path d="M21.50 13V16M27.16 13V16M32.83 0V16M38.50 13V16M44.16 13V16M49.83 13V16M55.50 13V16M61.16 11V16M66.83 13V16M72.50 13V16M78.16 13V16M83.83 13V16M89.50 0V16M95.16 13V16M100.83 13V16M106.50 13V16M112.16 13V16M117.83 11V16M123.50 13V16M129.16 13V16M134.83 13V16M140.50 13V16M146.17 0V16M151.83 13V16M157.50 13V16M163.17 13V16M168.83 13V16M174.50 11V16M180.17 13V16M185.83 13V16M191.50 13V16M197.17 13V16M202.83 0V16M208.50 13V16M214.17 13V16M219.83 13V16M225.50 13V16M231.17 11V16M236.83 13V16M242.50 13V16M248.17 13V16M253.83 13V16M259.50 0V16M265.17 13V16M270.83 13V16M276.50 13V16M282.17 13V16M287.83 11V16M293.50 13V16M299.17 13V16M304.83 13V16M310.50 13V16M316.17 0V16M321.83 13V16M327.50 13V16M333.17 13V16M338.83 13V16M344.50 11V16M350.17 13V16M355.83 13V16M361.50 13V16M367.17 13V16M372.83 0V16M378.50 13V16M384.17 13V16M389.83 13V16M395.50 13V16M401.17 11V16M406.83 13V16M412.50 13V16M418.17 13V16M423.83 13V16M429.50 0V16M435.17 13V16M440.83 13V16M446.50 13V16M452.17 13V16M457.83 11V16M463.50 13V16M469.17 13V16M474.83 13V16M480.50 13V16M486.17 0V16M491.83 13V16M497.50 13V16M503.17 13V16M508.83 13V16M514.50 11V16M520.17 13V16M525.83 13V16M531.50 13V16M537.17 13V16M542.83 0V16M548.50 13V16M554.17 13V16M559.83 13V16M565.50 13V16M571.17 11V16M576.83 13V16M582.50 13V16M588.17 13V16M593.83 13V16M599.50 0V16M605.17 13V16M610.83 13V16M616.50 13V16M622.17 13V16M627.83 11V16M633.50 13V16M639.17 13V16M644.83 13V16M650.50 13V16M656.17 0V16M661.83 13V16M667.50 13V16M673.17 13V16M678.83 13V16M684.50 11V16M690.17 13V16M695.83 13V16M701.50 13V16M707.17 13V16M712.84 0V16M718.50 13V16M724.17 13V16M729.84 13V16M735.50 13V16M741.17 11V16M746.84 13V16M752.50 13V16M758.17 13V16M763.84 13V16M769.50 0V16M775.17 13V16M780.84 13V16M786.50 13V16M792.17 13V16M797.84 11V16M803.50 13V16M809.17 13V16M814.84 13V16M820.50 13V16M826.17 0V16M831.84 13V16M837.50 13V16M843.17 13V16M848.84 13V16M854.50 11V16M860.17 13V16M865.84 13V16M871.50 13V16M877.17 13V16M882.84 0V16M888.50 13V16M894.17 13V16M899.84 13V16M905.50 13V16M911.17 11V16M916.84 13V16M922.50 13V16M928.17 13V16M933.84 13V16M939.50 0V16M945.17 13V16M950.84 13V16M956.50 13V16M962.17 13V16M967.84 11V16M973.50 13V16M979.17 13V16M984.84 13V16M990.50 13V16M996.17 0V16M1001.84 13V16M1007.50 13V16M1013.17 13V16M1018.84 13V16M1024.50 11V16M1030.17 13V16M1035.84 13V16M1041.50 13V16M1047.17 13V16M1052.84 0V16M1058.50 13V16M1064.17 13V16M1069.84 13V16M1075.50 13V16M1081.17 11V16M1086.84 13V16M1092.50 13V16M1098.17 13V16M1103.84 13V16M1109.50 0V16M1115.17 13V16M1120.84 13V16M1126.50 13V16M1132.17 13V16M1137.84 11V16M1143.50 13V16M1149.17 13V16M1154.84 13V16M1160.50 13V16M1166.17 0V16M1171.84 13V16M1177.50 13V16M1183.17 13V16M1188.84 13V16M1194.50 11V16M1200.17 13V16M1205.84 13V16M1211.50 13V16M1217.17 13V16M1222.84 0V16M1228.50 13V16M1234.17 13V16M1239.84 13V16M1245.50 13V16M1251.17 11V16M1256.84 13V16M1262.50 13V16M1268.17 13V16M1273.84 13V16M1279.51 0V16M1285.17 13V16M1290.84 13V16M1296.51 13V16M1302.17 13V16M1307.84 11V16M1313.51 13V16M1319.17 13V16M1324.84 13V16M1330.51 13V16M1336.17 0V16M1341.84 13V16M1347.51 13V16M1353.17 13V16M1358.84 13V16M1364.51 11V16M1370.17 13V16M1375.84 13V16M1381.51 13V16M1387.17 13V16M1392.84 0V16M1398.51 13V16M1404.17 13V16M1409.84 13V16M1415.51 13V16M1421.17 11V16M1426.84 13V16M1432.51 13V16M1438.17 13V16M1443.84 13V16M1449.51 0V16M1455.17 13V16M1460.84 13V16M1466.51 13V16M1472.17 13V16M1477.84 11V16M1483.51 13V16M1489.17 13V16M1494.84 13V16M1500.51 13V16M1506.17 0V16M1511.84 13V16M1517.51 13V16M1523.17 13V16M1528.84 13V16M1534.51 11V16M1540.17 13V16M1545.84 13V16M1551.51 13V16M1557.17 13V16M1562.84 0V16M1568.51 13V16M1574.17 13V16M1579.84 13V16M1585.51 13V16M1591.17 11V16M1596.84 13V16M1602.51 13V16M1608.17 13V16M1613.84 13V16M1619.51 0V16M1625.17 13V16" stroke="#000" stroke-width="1" shape-rendering="crispEdges"/></svg>
<div class="t" style="left:73.33px;top:106.00px;line-height:10px;font-size:9px;color:#111;">70</div>
<div class="t" style="left:130.00px;top:106.00px;line-height:10px;font-size:9px;color:#111;">60</div>
<div class="t" style="left:186.67px;top:106.00px;line-height:10px;font-size:9px;color:#111;">50</div>
<div class="t" style="left:243.33px;top:106.00px;line-height:10px;font-size:9px;color:#111;">40</div>
<div class="t" style="left:300.00px;top:106.00px;line-height:10px;font-size:9px;color:#111;">30</div>
<div class="t" style="left:356.67px;top:106.00px;line-height:10px;font-size:9px;color:#111;">20</div>
<div class="t" style="left:413.33px;top:106.00px;line-height:10px;font-size:9px;color:#111;">10</div>
<div class="t" style="left:470.00px;top:106.00px;line-height:10px;font-size:9px;color:#111;">0</div>
<div class="t" style="left:526.67px;top:106.00px;line-height:10px;font-size:9px;color:#111;">10</div>
<div class="t" style="left:583.33px;top:106.00px;line-height:10px;font-size:9px;color:#111;">20</div>
<div class="t" style="left:640.00px;top:106.00px;line-height:10px;font-size:9px;color:#111;">30</div>
<div class="t" style="left:696.67px;top:106.00px;line-height:10px;font-size:9px;color:#111;">40</div>
<div class="t" style="left:753.34px;top:106.00px;line-height:10px;font-size:9px;color:#111;">50</div>
<div class="t" style="left:810.00px;top:106.00px;line-height:10px;font-size:9px;color:#111;">60</div>
<div class="t" style="left:866.67px;top:106.00px;line-height:10px;font-size:9px;color:#111;">70</div>
<div class="t" style="left:923.34px;top:106.00px;line-height:10px;font-size:9px;color:#111;">80</div>
<div class="t" style="left:980.00px;top:106.00px;line-height:10px;font-size:9px;color:#111;">90</div>
<div class="t" style="left:1036.67px;top:106.00px;line-height:10px;font-size:9px;color:#111;">100</div>
<div class="t" style="left:1093.34px;top:106.00px;line-height:10px;font-size:9px;color:#111;">110</div>
<div class="t" style="left:1150.00px;top:106.00px;line-height:10px;font-size:9px;color:#111;">120</div>
<div class="t" style="left:1206.67px;top:106.00px;line-height:10px;font-size:9px;color:#111;">130</div>
<div class="t" style="left:1263.34px;top:106.00px;line-height:10px;font-size:9px;color:#111;">140</div>
<div class="t" style="left:1320.01px;top:106.00px;line-height:10px;font-size:9px;color:#111;">150</div>
<div class="t" style="left:1376.67px;top:106.00px;line-height:10px;font-size:9px;color:#111;">160</div>
<div class="t" style="left:1433.34px;top:106.00px;line-height:10px;font-size:9px;color:#111;">170</div>
<div class="t" style="left:1490.01px;top:106.00px;line-height:10px;font-size:9px;color:#111;">180</div>
<div class="t" style="left:1546.67px;top:106.00px;line-height:10px;font-size:9px;color:#111;">190</div>
<div class="t" style="left:1603.34px;top:106.00px;line-height:10px;font-size:9px;color:#111;">200</div>
<div class="t" style="left:1660.01px;top:106.00px;line-height:10px;font-size:9px;color:#111;">210</div>
<svg style="left:38px;top:105px;" width="16" height="917" viewBox="0 0 16 917"><path d="M13 19.50H16M13 25.17H16M13 30.83H16M0 36.50H16M13 42.17H16M13 47.83H16M13 53.50H16M13 59.17H16M11 64.83H16M13 70.50H16M13 76.17H16M13 81.83H16M13 87.50H16M0 93.17H16M13 98.83H16M13 104.50H16M13 110.17H16M13 115.83H16M11 121.50H16M13 127.17H16M13 132.83H16M13 138.50H16M13 144.17H16M0 149.83H16M13 155.50H16M13 161.17H16M13 166.83H16M13 172.50H16M11 178.17H16M13 183.83H16M13 189.50H16M13 195.17H16M13 200.83H16M0 206.50H16M13 212.17H16M13 217.83H16M13 223.50H16M13 229.17H16M11 234.83H16M13 240.50H16M13 246.17H16M13 251.83H16M13 257.50H16M0 263.17H16M13 268.83H16M13 274.50H16M13 280.17H16M13 285.83H16M11 291.50H16M13 297.17H16M13 302.83H16M13 308.50H16M13 314.17H16M0 319.83H16M13 325.50H16M13 331.17H16M13 336.83H16M13 342.50H16M11 348.17H16M13 353.83H16M13 359.50H16M13 365.17H16M13 370.83H16M0 376.50H16M13 382.17H16M13 387.83H16M13 393.50H16M13 399.17H16M11 404.83H16M13 410.50H16M13 416.17H16M13 421.83H16M13 427.50H16M0 433.17H16M13 438.83H16M13 444.50H16M13 450.17H16M13 455.83H16M11 461.50H16M13 467.17H16M13 472.83H16M13 478.50H16M13 484.17H16M0 489.84H16M13 495.50H16M13 501.17H16M13 506.84H16M13 512.50H16M11 518.17H16M13 523.84H16M13 529.50H16M13 535.17H16M13 540.84H16M0 546.50H16M13 552.17H16M13 557.84H16M13 563.50H16M13 569.17H16M11 574.84H16M13 580.50H16M13 586.17H16M13 591.84H16M13 597.50H16M0 603.17H16M13 608.84H16M13 614.50H16M13 620.17H16M13 625.84H16M11 631.50H16M13 637.17H16M13 642.84H16M13 648.50H16M13 654.17H16M0 659.84H16M13 665.50H16M13 671.17H16M13 676.84H16M13 682.50H16M11 688.17H16M13 693.84H16M13 699.50H16M13 705.17H16M13 710.84H16M0 716.50H16M13 722.17H16M13 727.84H16M13 733.50H16M13 739.17H16M11 744.84H16M13 750.50H16M13 756.17H16M13 761.84H16M13 767.50H16M0 773.17H16M13 778.84H16M13 784.50H16M13 790.17H16M13 795.84H16M11 801.50H16M13 807.17H16M13 812.84H16M13 818.50H16M13 824.17H16M0 829.84H16M13 835.50H16M13 841.17H16M13 846.84H16M13 852.50H16M11 858.17H16M13 863.84H16M13 869.50H16M13 875.17H16M13 880.84H16M0 886.50H16M13 892.17H16M13 897.84H16M13 903.50H16M13 909.17H16" stroke="#000" stroke-width="1" shape-rendering="crispEdges"/></svg>
<div class="t" style="left:39.50px;top:144.00px;line-height:8px;font-size:9.5px;color:#000;">3</div>
<div class="t" style="left:39.50px;top:151.00px;line-height:8px;font-size:9.5px;color:#000;">0</div>
<div class="t" style="left:39.50px;top:200.67px;line-height:8px;font-size:9.5px;color:#000;">2</div>
<div class="t" style="left:39.50px;top:207.67px;line-height:8px;font-size:9.5px;color:#000;">0</div>
<div class="t" style="left:39.50px;top:257.33px;line-height:8px;font-size:9.5px;color:#000;">1</div>
<div class="t" style="left:39.50px;top:264.33px;line-height:8px;font-size:9.5px;color:#000;">0</div>
<div class="t" style="left:39.50px;top:314.00px;line-height:8px;font-size:9.5px;color:#000;">0</div>
<div class="t" style="left:39.50px;top:370.67px;line-height:8px;font-size:9.5px;color:#000;">1</div>
<div class="t" style="left:39.50px;top:377.67px;line-height:8px;font-size:9.5px;color:#000;">0</div>
<div class="t" style="left:39.50px;top:427.33px;line-height:8px;font-size:9.5px;color:#000;">2</div>
<div class="t" style="left:39.50px;top:434.33px;line-height:8px;font-size:9.5px;color:#000;">0</div>
<div class="t" style="left:39.50px;top:484.00px;line-height:8px;font-size:9.5px;color:#000;">3</div>
<div class="t" style="left:39.50px;top:491.00px;line-height:8px;font-size:9.5px;color:#000;">0</div>
<div class="t" style="left:39.50px;top:540.67px;line-height:8px;font-size:9.5px;color:#000;">4</div>
<div class="t" style="left:39.50px;top:547.67px;line-height:8px;font-size:9.5px;color:#000;">0</div>
<div class="t" style="left:39.50px;top:597.34px;line-height:8px;font-size:9.5px;color:#000;">5</div>
<div class="t" style="left:39.50px;top:604.34px;line-height:8px;font-size:9.5px;color:#000;">0</div>
<div class="t" style="left:39.50px;top:654.00px;line-height:8px;font-size:9.5px;color:#000;">6</div>
<div class="t" style="left:39.50px;top:661.00px;line-height:8px;font-size:9.5px;color:#000;">0</div>
<div class="t" style="left:39.50px;top:710.67px;line-height:8px;font-size:9.5px;color:#000;">7</div>
<div class="t" style="left:39.50px;top:717.67px;line-height:8px;font-size:9.5px;color:#000;">0</div>
<div class="t" style="left:39.50px;top:767.34px;line-height:8px;font-size:9.5px;color:#000;">8</div>
<div class="t" style="left:39.50px;top:774.34px;line-height:8px;font-size:9.5px;color:#000;">0</div>
<div class="t" style="left:39.50px;top:824.00px;line-height:8px;font-size:9.5px;color:#000;">9</div>
<div class="t" style="left:39.50px;top:831.00px;line-height:8px;font-size:9.5px;color:#000;">0</div>
<div class="t" style="left:39.50px;top:880.67px;line-height:8px;font-size:9.5px;color:#000;">1</div>
<div class="t" style="left:39.50px;top:887.67px;line-height:8px;font-size:9.5px;color:#000;">0</div>
<div class="t" style="left:39.50px;top:894.67px;line-height:8px;font-size:9.5px;color:#000;">0</div>
<div class="t" style="left:39.50px;top:937.34px;line-height:8px;font-size:9.5px;color:#000;">1</div>
<div class="t" style="left:39.50px;top:944.34px;line-height:8px;font-size:9.5px;color:#000;">1</div>
<div class="t" style="left:39.50px;top:951.34px;line-height:8px;font-size:9.5px;color:#000;">0</div>
<div class="t" style="left:39.50px;top:994.00px;line-height:8px;font-size:9.5px;color:#000;">1</div>
<div class="t" style="left:39.50px;top:1001.00px;line-height:8px;font-size:9.5px;color:#000;">2</div>
<div class="t" style="left:39.50px;top:1008.00px;line-height:8px;font-size:9.5px;color:#000;">0</div>
<div style="left:38px;top:120px;width:1629px;height:1px;background:#000;"></div>
<div style="left:53px;top:105px;width:1px;height:917px;background:#000;"></div>
<svg style="left:38px;top:105px;" width="16" height="16" viewBox="0 0 16 16"><path d="M0 7.500H15M5.500 0V15" stroke="#000" stroke-dasharray="1 1" shape-rendering="crispEdges"/></svg>
<svg style="left:38px;top:755px;" width="16" height="2" viewBox="0 0 16 2"><path d="M0 0.500H16" stroke="#000" stroke-dasharray="1 1" shape-rendering="crispEdges"/></svg>
<div style="left:467px;top:311px;width:1192px;height:562px;background:#fff;border:1px solid #000;box-sizing:border-box;"></div>
<div style="left:627px;top:312px;width:1031px;height:78px;background:#00709f;"></div>
<div style="left:5px;top:97px;width:33px;height:528px;background:#f0f0f0;"></div>
<div style="left:5px;top:625px;width:33px;height:410px;background:#707070;"></div>
<div style="left:4px;top:85px;width:1px;height:950px;background:#555;"></div>
<div style="left:37px;top:97px;width:1px;height:938px;background:#555;"></div>
<div style="left:10px;top:101px;width:23px;height:3px;background-image:conic-gradient(#9c9c9c 25%,transparent 0);background-size:2px 2px;"></div>
<div style="left:9px;top:114px;width:24px;height:21px;border:1px solid #6a6a6a;border-radius:3px;box-sizing:border-box;background:linear-gradient(#d2d2d2,#e8e8e8);box-shadow:inset 0 1px 2px #9a9a9a;"></div>
<svg style="left:17.0px;top:116.5px;" width="10" height="16" viewBox="0 0 10 16"><path d="M0 0V13L3 10.200L5.200 15.200L7.600 14.200L5.400 9.300H9.400Z" fill="#111"/></svg>
<svg style="left:17.0px;top:138.0px;" width="10" height="16" viewBox="0 0 10 16"><path d="M0 0V13L3 10.200L5.200 15.200L7.600 14.200L5.400 9.300H9.400Z" fill="#fff" stroke="#111" stroke-width="1.500" transform="translate(0.500,0.300) scale(0.900)"/></svg>
<svg style="left:13.0px;top:158.0px;" width="16" height="17" viewBox="0 0 16 17"><path d="M1.500 0.500H8.500L11.500 3.500V12.500H1.500Z" fill="#f6f6f6" stroke="#8a8a8a"/><path d="M8.500 0.500V3.500H11.500" fill="none" stroke="#8a8a8a"/><path d="M9 6V15L11 13L12.500 16.500L14 15.800L12.600 12.500H15.300Z" fill="#111"/></svg>
<svg style="left:11.0px;top:180.5px;" width="20" height="14" viewBox="0 0 20 14"><path d="M1 0V14M19 0V14" stroke="#111" stroke-width="1.300"/><path d="M4 7H16M7 4L4 7L7 10M13 4L16 7L13 10" stroke="#111" fill="none" stroke-width="1.200"/></svg>
<div class="t" style="left:21.00px;top:204.00px;line-height:22px;font-size:20px;color:#111;font-family:'Liberation Serif',serif;transform:translateX(-50%);">T</div>
<div style="left:29px;top:220px;width:3px;height:3px;background:linear-gradient(135deg,transparent 50%,#111 50%);"></div>
<svg style="left:12.0px;top:229.0px;" width="16" height="16" viewBox="0 0 16 16"><path d="M1 1L15 15" stroke="#111" stroke-width="1.300"/></svg>
<svg style="left:14.0px;top:247.5px;" width="14" height="19" viewBox="0 0 14 19"><path d="M7 0.500L11.500 8L9 13H5L2.500 8Z" fill="#fff" stroke="#111"/><path d="M7 2V9" stroke="#111"/><circle cx="7" cy="9.500" r="1.200" fill="#111"/><rect x="4.500" y="14" width="5" height="3.500" fill="#111"/></svg>
<div style="left:32px;top:264px;width:3px;height:3px;background:linear-gradient(135deg,transparent 50%,#111 50%);"></div>
<svg style="left:12.0px;top:271.0px;" width="18" height="18" viewBox="0 0 18 18"><path d="M2 16L3.500 11L12.500 2L16 5.500L7 14.500Z" fill="#e8e8e8" stroke="#222"/><path d="M2 16L3.500 11L7 14.500Z" fill="#444"/><path d="M11 3.500L14.500 7" stroke="#222"/></svg>
<div style="left:32px;top:287px;width:3px;height:3px;background:linear-gradient(135deg,transparent 50%,#111 50%);"></div>
<svg style="left:13.0px;top:293.5px;" width="16" height="13" viewBox="0 0 16 13"><rect x="0.500" y="0.500" width="14" height="11" fill="#fafafa" stroke="#111" stroke-width="1.300"/><path d="M0.500 0.500L14.500 11.500M14.500 0.500L0.500 11.500" stroke="#111"/></svg>
<div style="left:32px;top:306px;width:3px;height:3px;background:linear-gradient(135deg,transparent 50%,#111 50%);"></div>
<svg style="left:13.0px;top:315.5px;" width="16" height="13" viewBox="0 0 16 13"><defs><linearGradient id="rg" x1="0" y1="0" x2="1" y2="1"><stop offset="0" stop-color="#fff"/><stop offset="1" stop-color="#999"/></linearGradient></defs><rect x="0.500" y="0.500" width="14" height="11" fill="url(#rg)" stroke="#555"/></svg>
<div style="left:32px;top:328px;width:3px;height:3px;background:linear-gradient(135deg,transparent 50%,#111 50%);"></div>
<div style="left:9px;top:335px;width:25px;height:1px;background:#bdbdbd;"></div>
<div style="left:9px;top:336px;width:25px;height:1px;background:#fbfbfb;"></div>
<svg style="left:11.5px;top:343.0px;" width="19" height="12" viewBox="0 0 19 12"><circle cx="3" cy="2.800" r="2.200" fill="none" stroke="#111" stroke-width="1.300"/><circle cx="3" cy="9.200" r="2.200" fill="none" stroke="#111" stroke-width="1.300"/><path d="M5 4L18 10.500M5 8L18 1.500" stroke="#111" stroke-width="1.400"/></svg>
<svg style="left:12.0px;top:363.0px;" width="18" height="14" viewBox="0 0 18 14"><rect x="3.500" y="1.500" width="13" height="11" fill="none" stroke="#111" stroke-dasharray="2 1.500" stroke-width="1.300"/><path d="M0 0V10L3 7.500L5 12L7 11L5 6.800H9Z" fill="#111"/></svg>
<div style="left:32px;top:377px;width:3px;height:3px;background:linear-gradient(135deg,transparent 50%,#111 50%);"></div>
<div style="left:13px;top:384px;width:16px;height:13px;background:linear-gradient(90deg,#fff,#111);border:1px solid #555;box-sizing:border-box;"></div>
<div style="left:13px;top:405px;width:16px;height:13px;background:linear-gradient(#555,#ddd);border:1px solid #888;box-sizing:border-box;"></div>
<svg style="left:13px;top:411px;" width="16" height="7" viewBox="0 0 16 7"><path d="M1 1h2v2H1zM5 1h2v2H5zM9 1h2v2H9zM13 1h2v2h-2zM3 3h2v2H3zM7 3h2v2H7zM11 3h2v2h-2z" fill="#fff" opacity="0.700"/></svg>
<div style="left:9px;top:426px;width:25px;height:1px;background:#bdbdbd;"></div>
<div style="left:9px;top:427px;width:25px;height:1px;background:#fbfbfb;"></div>
<svg style="left:13.5px;top:432.5px;" width="15" height="15" viewBox="0 0 15 15"><path d="M0.500 0.500H14.500V10.500L10.500 14.500H0.500Z" fill="#f6f6f6" stroke="#444"/><path d="M3 4H12M3 6.500H12M3 9H9" stroke="#444"/><path d="M14.500 10.500H10.500V14.500" fill="#ccc" stroke="#444"/></svg>
<svg style="left:12.0px;top:452.5px;" width="18" height="16" viewBox="0 0 18 16"><path d="M1 11.500L12.500 1L17 6L5.500 16Z" fill="#e4e4e4" stroke="#444"/><path d="M4 9l1.500 1.500M6.500 7L8 8.500M9 5l1.500 1.500M11.500 3L13 4.500" stroke="#444"/></svg>
<div style="left:32px;top:467px;width:3px;height:3px;background:linear-gradient(135deg,transparent 50%,#111 50%);"></div>
<svg style="left:12.5px;top:474.5px;" width="17" height="17" viewBox="0 0 17 17"><path d="M4 16C3 13 1 11 0.800 9.500C0.600 8 2 7.800 3 9L4.500 10.500V3.500C4.500 2 6.500 2 6.500 3.500V2C6.500 0.400 8.600 0.400 8.600 2V3C8.600 1.500 10.700 1.500 10.700 3V4.500C10.700 3.300 12.700 3.300 12.700 4.700V11C12.700 13 12 14.500 11.500 16Z" fill="#fff" stroke="#222" stroke-width="1.100"/><path d="M6.500 3.500V8M8.600 3V8M10.700 4.500V8" stroke="#222"/></svg>
<svg style="left:13.0px;top:495.0px;" width="16" height="16" viewBox="0 0 16 16"><circle cx="6" cy="6" r="4.700" fill="#f4f4f4" stroke="#333" stroke-width="1.300"/><path d="M9.500 9.500L15 15" stroke="#222" stroke-width="2.400"/></svg>
<div style="left:9px;top:516px;width:25px;height:1px;background:#bdbdbd;"></div>
<div style="left:9px;top:517px;width:25px;height:1px;background:#fbfbfb;"></div>
<div style="left:11px;top:523px;width:13px;height:13px;background:#fff;border:1px solid #333;box-sizing:border-box;"></div>
<svg style="left:11px;top:523px;" width="13" height="13" viewBox="0 0 13 13"><path d="M1 12L12 1" stroke="#d0102a" stroke-width="1.500"/></svg>
<div style="left:19px;top:531px;width:12px;height:12px;background:#fff;border:1px solid #7a1020;box-sizing:border-box;"></div>
<svg style="left:19px;top:531px;" width="12" height="12" viewBox="0 0 12 12"><rect x="2.500" y="2.500" width="7" height="7" fill="#fff" stroke="#7a1020"/><path d="M1 11L11 1" stroke="#d0102a" stroke-width="1.500"/></svg>
<svg style="left:27px;top:522px;" width="7" height="8" viewBox="0 0 7 8"><path d="M1 2C4 0.500 5.500 3 5 6" fill="none" stroke="#222"/><path d="M0 3.500L1.500 0.500L3 3.500zM3.500 5H6.500L5 7.500z" fill="#222"/></svg>
<svg style="left:10px;top:544px;" width="9" height="9" viewBox="0 0 9 9"><rect x="3.500" y="3.500" width="5" height="5" fill="#111"/><rect x="0.500" y="0.500" width="5" height="5" fill="#fff" stroke="#111"/><path d="M1 5L5 1" stroke="#d0102a"/></svg>
<div style="left:9px;top:555px;width:25px;height:1px;background:#bdbdbd;"></div>
<div style="left:9px;top:556px;width:25px;height:1px;background:#fbfbfb;"></div>
<svg style="left:10px;top:557px;" width="12" height="9" viewBox="0 0 12 9"><rect x="0.500" y="0.500" width="10" height="7" rx="1" fill="#ddd" stroke="#333"/><rect x="2.500" y="2.500" width="6" height="3" fill="#fff" stroke="#555"/></svg>
<div class="t" style="left:25.00px;top:556.50px;line-height:10px;font-size:9px;color:#222;font-weight:bold;font-family:'Liberation Serif',serif;">T</div>
<div style="left:9px;top:568px;width:25px;height:1px;background:#bdbdbd;"></div>
<div style="left:9px;top:569px;width:25px;height:1px;background:#fbfbfb;"></div>
<div style="left:9px;top:573px;width:25px;height:21px;border:1px solid #6a6a6a;border-radius:4px;box-sizing:border-box;background:linear-gradient(#d0d0d0,#e8e8e8);box-shadow:inset 0 1px 2px #9a9a9a;"></div>
<div style="left:15px;top:577px;width:13px;height:13px;background:#fff;border:1px solid #333;box-sizing:border-box;"></div>
<svg style="left:15px;top:577px;" width="13" height="13" viewBox="0 0 13 13"><path d="M1 12L12 1" stroke="#d0102a" stroke-width="1.500"/></svg>
<div style="left:30px;top:590px;width:3px;height:3px;background:linear-gradient(135deg,transparent 50%,#111 50%);"></div>
<div style="left:9px;top:598px;width:25px;height:1px;background:#bdbdbd;"></div>
<div style="left:9px;top:599px;width:25px;height:1px;background:#fbfbfb;"></div>
<div style="left:9px;top:601px;width:25px;height:21px;border:1px solid #6a6a6a;border-radius:4px;box-sizing:border-box;background:linear-gradient(#d0d0d0,#e8e8e8);box-shadow:inset 0 1px 2px #9a9a9a;"></div>
<div style="left:14px;top:605px;width:15px;height:13px;background:linear-gradient(#f0f0f0,#a8a8a8);border:1px solid #333;box-sizing:border-box;border-radius:1px;"></div>
<div style="left:17px;top:608px;width:9px;height:7px;background:linear-gradient(#ddd,#999);border:1px solid #555;box-sizing:border-box;"></div>
<div style="left:30px;top:618px;width:3px;height:3px;background:linear-gradient(135deg,transparent 50%,#111 50%);"></div>
<div style="left:2px;top:85px;width:2px;height:950px;background:linear-gradient(90deg,#fafafa,#c4c4c4);"></div>
<div style="left:-2px;top:199px;width:44px;height:29px;border:5px solid #fe0000;box-sizing:border-box;border-radius:2px;"></div>
<div style="left:1865px;top:105px;width:14px;height:916px;background:#f0f0f0;"></div>
<div style="left:1865px;top:105px;width:1px;height:916px;background:#e2e2e2;"></div>
<div style="left:1866px;top:122px;width:13px;height:840px;background:linear-gradient(90deg,#fff,#f2f2f2 40%,#c8c8c8 85%,#adadad);border:1px solid #a9a9a9;box-sizing:border-box;border-radius:2px;"></div>
<svg style="left:1868.5px;top:1010.5px;" width="7" height="4" viewBox="0 0 7 4"><path d="M0 0H7L3.5 4Z" fill="#444"/></svg>
<div style="left:38px;top:1021px;width:1841px;height:14px;background:#f0f0f0;"></div>
<div style="left:38px;top:1020px;width:1841px;height:1px;background:#dcdcdc;"></div>
<div style="left:69px;top:1021px;width:96px;height:14px;background:#fff;"></div>
<svg style="left:40px;top:1023px;" width="8" height="9" viewBox="0 0 8 9"><path d="M1 0V9" stroke="#888" stroke-width="1.300"/><path d="M7.500 0.500V8.500L2.500 4.500Z" fill="#aaa" stroke="#888" stroke-width="0.600"/></svg>
<svg style="left:57px;top:1023px;" width="6" height="9" viewBox="0 0 6 9"><path d="M5.500 0.500V8.500L0.500 4.500Z" fill="#aaa" stroke="#888" stroke-width="0.600"/></svg>
<div class="t" style="left:70.50px;top:1019.50px;line-height:16px;font-size:10.5px;color:#111;">1</div>
<svg style="left:154.0px;top:1029.0px;" width="7" height="4" viewBox="0 0 7 4"><path d="M0 0H7L3.5 4Z" fill="#111"/></svg>
<svg style="left:171px;top:1023px;" width="6" height="9" viewBox="0 0 6 9"><path d="M0.500 0.500V8.500L5.500 4.500Z" fill="#aaa" stroke="#888" stroke-width="0.600"/></svg>
<svg style="left:184px;top:1023px;" width="8" height="9" viewBox="0 0 8 9"><path d="M7 0V9" stroke="#888" stroke-width="1.300"/><path d="M0.500 0.500V8.500L5.500 4.500Z" fill="#aaa" stroke="#888" stroke-width="0.600"/></svg>
<div style="left:200.5px;top:1022.5px;width:11px;height:11px;border-radius:50%;background:radial-gradient(circle at 40% 30%,#8dff5a,#22c010 55%,#0d8a05);"></div>
<div class="t" style="left:215.00px;top:1019.50px;line-height:16px;font-size:10.5px;color:#111;transform:scaleX(0.8909);transform-origin:left center;">Ohne Fehler</div>
<svg style="left:285.0px;top:1025.75px;" width="6" height="3.5" viewBox="0 0 6 3.5"><path d="M0 0H6L3.0 3.5Z" fill="#333"/></svg>
<svg style="left:302px;top:1022px;" width="16" height="13" viewBox="0 0 16 13"><circle cx="6.500" cy="6.500" r="5.500" fill="#e8e8e8" stroke="#555" stroke-width="1.600"/><path d="M4 4H8L9.500 5.500V9.500H4Z" fill="#fff" stroke="#333" stroke-width="0.800"/><path d="M12 11h3l-1.500 1.500z" fill="#111"/></svg>
<div style="left:321px;top:1021px;width:1px;height:14px;background:#dedede;"></div>
<svg style="left:328.0px;top:1024.0px;" width="4" height="7" viewBox="0 0 4 7"><path d="M4 0V7L0 3.5Z" fill="#333"/></svg>
<svg style="left:1854.0px;top:1024.0px;" width="4" height="7" viewBox="0 0 4 7"><path d="M0 0V7L4 3.5Z" fill="#333"/></svg>
<div style="left:671px;top:1022px;width:600px;height:12px;background:linear-gradient(#fdfdfd,#ececec 45%,#d3d3d3);border:1px solid #a9a9a9;box-sizing:border-box;border-radius:2px;"></div>
<div style="left:1867px;top:1023px;width:11px;height:11px;background-image:conic-gradient(#9c9c9c 25%,transparent 0);background-size:2px 2px;clip-path:polygon(100% 0,100% 100%,0 100%);"></div>
<div style="left:0px;top:1035px;width:1920px;height:1px;background:#fcfcfc;"></div>
<div style="left:0px;top:1036px;width:1920px;height:1px;background:#8a8a8a;"></div>
<div style="left:0px;top:1037px;width:1920px;height:3px;background:#f4f4f4;"></div>
<div style="left:1879px;top:85px;width:1px;height:950px;background:#4a4a4a;"></div>
<div style="left:1880px;top:85px;width:36px;height:12px;background:linear-gradient(#4a4a4a,#5e5e5e);"></div>
<svg style="left:1904px;top:87px;" width="10" height="8" viewBox="0 0 10 8"><path d="M4 0.500L0 4L4 7.500ZM9 0.500L5 4L9 7.500Z" fill="#d8d8d8"/></svg>
<div style="left:1880px;top:97px;width:36px;height:637px;background:#f0f0f0;"></div>
<div style="left:1880px;top:734px;width:36px;height:301px;background:#707070;"></div>
<div style="left:1915px;top:85px;width:1px;height:950px;background:#555;"></div>
<div style="left:1916px;top:38px;width:4px;height:997px;background:linear-gradient(90deg,#d8d8d8,#fafafa 60%,#9a9a9a);"></div>
<div style="left:1885px;top:101px;width:26px;height:3px;background-image:conic-gradient(#9c9c9c 25%,transparent 0);background-size:2px 2px;"></div>
<div style="left:1883px;top:108px;width:30px;height:28px;border:1px solid #777;border-radius:4px;box-sizing:border-box;background:linear-gradient(#c4c4c4,#e2e2e2);box-shadow:inset 0 1px 3px #888;"></div>
<svg style="left:1887.5px;top:113.0px;" width="20" height="18" viewBox="0 0 20 18"><path d="M10 6L19 10.500L10 16L1 10.500Z" fill="#444"/><path d="M10 1L19 5.500L10 10.500L1 5.500Z" fill="#e8e8e8" stroke="#999" stroke-width="0.600"/></svg>
<svg style="left:1888.5px;top:144.0px;" width="18" height="17" viewBox="0 0 18 17"><path d="M1.500 4.500L3.500 2.500H14.500L16.500 4.500V13.500H1.500Z" fill="#f4f4f4" stroke="#333" stroke-width="1.200"/><path d="M9 0V17" stroke="#333" stroke-width="1.200"/></svg>
<svg style="left:1888.0px;top:174.0px;" width="19" height="15" viewBox="0 0 19 15"><g fill="none" stroke="#333" stroke-width="1.600"><rect x="1.500" y="2" width="8" height="5.500" rx="2.700" transform="rotate(25 5 5)"/><rect x="9" y="7.500" width="8" height="5.500" rx="2.700" transform="rotate(25 13 10)"/><path d="M7 6.500L11.500 9"/></g></svg>
<div style="left:1880px;top:199px;width:36px;height:1px;background:#8e8e8e;"></div>
<div style="left:1880px;top:200px;width:36px;height:1px;background:#fbfbfb;"></div>
<div style="left:1885px;top:205px;width:26px;height:3px;background-image:conic-gradient(#9c9c9c 25%,transparent 0);background-size:2px 2px;"></div>
<svg style="left:1888.5px;top:219.25px;" width="18" height="13.5" viewBox="0 0 18 13.5"><rect x="0.0" y="0.0" width="3.700" height="3.700" fill="#333"/><rect x="4.5" y="0.0" width="3.700" height="3.700" fill="#777"/><rect x="9.0" y="0.0" width="3.700" height="3.700" fill="#aaa"/><rect x="13.5" y="0.0" width="3.700" height="3.700" fill="#555"/><rect x="0.0" y="4.5" width="3.700" height="3.700" fill="#777"/><rect x="4.5" y="4.5" width="3.700" height="3.700" fill="#aaa"/><rect x="9.0" y="4.5" width="3.700" height="3.700" fill="#555"/><rect x="13.5" y="4.5" width="3.700" height="3.700" fill="#333"/><rect x="0.0" y="9.0" width="3.700" height="3.700" fill="#aaa"/><rect x="4.5" y="9.0" width="3.700" height="3.700" fill="#555"/><rect x="9.0" y="9.0" width="3.700" height="3.700" fill="#333"/><rect x="13.5" y="9.0" width="3.700" height="3.700" fill="#777"/></svg>
<svg style="left:1887.5px;top:248.5px;" width="20" height="17" viewBox="0 0 20 17"><path d="M10 1C4 1 0.500 5 1 9.500C1.500 14 5 16 8 15C10 14.300 9 12 11 11.500C14 11 19 12 19 7C19 3.500 15 1 10 1Z" fill="#555" stroke="#222"/><circle cx="5" cy="7" r="1.600" fill="#ddd"/><circle cx="8.500" cy="4.300" r="1.600" fill="#eee"/><circle cx="13" cy="4.500" r="1.600" fill="#ccc"/><circle cx="5.500" cy="11.500" r="1.500" fill="#bbb"/></svg>
<div style="left:1889px;top:279px;width:17px;height:13px;background:linear-gradient(90deg,#fff,#222);border:1px solid #444;box-sizing:border-box;"></div>
<div style="left:1880px;top:305px;width:36px;height:1px;background:#8e8e8e;"></div>
<div style="left:1880px;top:306px;width:36px;height:1px;background:#fbfbfb;"></div>
<div style="left:1885px;top:311px;width:26px;height:3px;background-image:conic-gradient(#9c9c9c 25%,transparent 0);background-size:2px 2px;"></div>
<svg style="left:1888.5px;top:324.5px;" width="18" height="13" viewBox="0 0 18 13"><path d="M0 1H18" stroke="#222" stroke-width="1"/><path d="M0 4.500H18" stroke="#222" stroke-width="2"/><path d="M0 10H18" stroke="#222" stroke-width="4"/></svg>
<div class="t" style="left:1897.50px;top:350.00px;line-height:20px;font-size:16px;color:#333;font-weight:bold;font-style:italic;font-family:'Liberation Serif',serif;transform:translateX(-50%);">fx</div>
<svg style="left:1888.5px;top:382.0px;" width="18" height="17" viewBox="0 0 18 17"><rect x="4.500" y="0.500" width="12" height="11" fill="#ddd" stroke="#333" stroke-dasharray="2 1"/><rect x="0.500" y="7.500" width="7" height="6" fill="#fff" stroke="#333"/><rect x="3.500" y="10.500" width="7" height="6" fill="#ccc" stroke="#333"/></svg>
<div style="left:1880px;top:408px;width:36px;height:1px;background:#8e8e8e;"></div>
<div style="left:1880px;top:409px;width:36px;height:1px;background:#fbfbfb;"></div>
<div style="left:1885px;top:414px;width:26px;height:3px;background-image:conic-gradient(#9c9c9c 25%,transparent 0);background-size:2px 2px;"></div>
<svg style="left:1888.5px;top:425.5px;" width="18" height="17" viewBox="0 0 18 17"><rect x="0.500" y="5.500" width="6" height="5" fill="#fff" stroke="#333"/><rect x="3.500" y="8.500" width="6" height="5" fill="#ccc" stroke="#333"/><path d="M11 1.500H17M13.500 1.500V13M16 1.500V13" stroke="#333" stroke-width="1.400" fill="none"/><path d="M13.500 1.500A3 3 0 0 0 13.500 7.500Z" fill="#333"/></svg>
<div class="t" style="left:1897.50px;top:452.00px;line-height:20px;font-size:19px;color:#333;font-weight:bold;transform:translateX(-50%);">¶</div>
<div class="t" style="left:1897.50px;top:483.50px;line-height:20px;font-size:18px;color:#333;font-weight:bold;font-style:italic;font-family:'Liberation Serif',serif;transform:translateX(-50%);">Aa</div>
<div style="left:1880px;top:512px;width:36px;height:1px;background:#8e8e8e;"></div>
<div style="left:1880px;top:513px;width:36px;height:1px;background:#fbfbfb;"></div>
<div style="left:1885px;top:518px;width:26px;height:3px;background-image:conic-gradient(#9c9c9c 25%,transparent 0);background-size:2px 2px;"></div>
<svg style="left:1889.0px;top:530.5px;" width="17" height="16" viewBox="0 0 17 16"><path d="M1 0V16" stroke="#222" stroke-width="1.500"/><rect x="3" y="2" width="8" height="4.500" fill="#555"/><rect x="3" y="9.500" width="13" height="5" fill="#222"/></svg>
<svg style="left:1889.0px;top:561.0px;" width="17" height="16" viewBox="0 0 17 16"><rect x="0.500" y="0.500" width="10" height="9" fill="#777" stroke="#333"/><rect x="6.500" y="6.500" width="10" height="9" fill="#222"/><rect x="6.500" y="6.500" width="4" height="3" fill="#ccc"/></svg>
<div style="left:1880px;top:586px;width:36px;height:1px;background:#8e8e8e;"></div>
<div style="left:1880px;top:587px;width:36px;height:1px;background:#fbfbfb;"></div>
<div style="left:1885px;top:592px;width:26px;height:3px;background-image:conic-gradient(#9c9c9c 25%,transparent 0);background-size:2px 2px;"></div>
<svg style="left:1889.0px;top:605.0px;" width="17" height="14" viewBox="0 0 17 14"><rect x="0.500" y="0.500" width="16" height="13" fill="#fff" stroke="#333"/><rect x="1" y="1" width="15" height="3.500" fill="#444"/><path d="M1 7.500H16M1 10.500H16M5.500 4V13" stroke="#333"/></svg>
<svg style="left:1888.5px;top:633.5px;" width="18" height="17" viewBox="0 0 18 17"><rect x="5.500" y="0.500" width="12" height="10" fill="#fff" stroke="#333"/><rect x="6" y="1" width="11" height="3" fill="#444"/><path d="M6 7H17" stroke="#333"/><rect x="0.500" y="7.500" width="6" height="5.500" fill="#fff" stroke="#333"/><rect x="3.500" y="10.500" width="6" height="5.500" fill="#ccc" stroke="#333"/></svg>
<svg style="left:1888.5px;top:663.5px;" width="18" height="17" viewBox="0 0 18 17"><rect x="5.500" y="0.500" width="12" height="10" fill="#fff" stroke="#333"/><rect x="6" y="1" width="11" height="2" fill="#444"/><rect x="10" y="5" width="7" height="5" fill="#333"/><rect x="0.500" y="7.500" width="6" height="5.500" fill="#fff" stroke="#333"/><rect x="3.500" y="10.500" width="6" height="5.500" fill="#ccc" stroke="#333"/></svg>
<div style="left:1880px;top:689px;width:36px;height:1px;background:#8e8e8e;"></div>
<div style="left:1880px;top:690px;width:36px;height:1px;background:#fbfbfb;"></div>
<div style="left:1885px;top:696px;width:26px;height:3px;background-image:conic-gradient(#9c9c9c 25%,transparent 0);background-size:2px 2px;"></div>
<svg style="left:1888.5px;top:708.0px;" width="18" height="18" viewBox="0 0 18 18"><path d="M15 2C10 0 4 1 4 5C4 8 13 8 13 11.500C13 14 8 14.500 3 13L2 16.500C8 18.500 16.500 17 16.500 11.500C16.500 7 8 7.500 8 5C8 3.500 11 3.500 14 4.500Z" fill="#555" stroke="#222" stroke-width="0.800"/></svg>
<svg style="left:513.7px;top:393px;" width="55" height="398" viewBox="0 0 55 398"><path d="M0 0.5H54.600V7.2H0ZM0 10.2H54.600V15.8H0ZM0 18.3H54.600V22.9H0ZM0 24.9H54.600V28.4H0ZM0 31.8H54.600V45.1H0ZM0 48.6H54.600V52.6H0ZM0 55.6H54.600V58.3H0ZM0 61.1H54.600V65.1H0ZM0 68.8H54.600V73.8H0ZM0 76.4H54.600V83.3H0ZM0 86.5H54.600V96.6H0ZM0 101.0H54.600V114.8H0ZM0 119.3H54.600V124.9H0ZM0 127.0H54.600V130.4H0ZM0 132.8H54.600V139.5H0ZM0 143.0H54.600V147.6H0ZM0 149.6H54.600V153.0H0ZM0 155.6H54.600V160.7H0ZM0 163.7H54.600V170.8H0ZM0 172.8H54.600V176.2H0ZM0 178.9H54.600V184.9H0ZM0 189.0H54.600V194.0H0ZM0 196.0H54.600V198.6H0ZM0 201.0H54.600V205.5H0ZM0 209.0H54.600V216.2H0ZM0 218.8H54.600V222.9H0ZM0 225.3H54.600V228.3H0ZM0 230.7H54.600V235.0H0ZM0 239.4H54.600V250.0H0ZM0 254.2H54.600V267.7H0ZM0 272.8H54.600V277.8H0ZM0 280.2H54.600V283.5H0ZM0 286.3H54.600V290.3H0ZM0 292.4H54.600V299.0H0ZM0 302.5H54.600V307.0H0ZM0 309.3H54.600V312.6H0ZM0 314.8H54.600V319.6H0ZM0 323.3H54.600V329.3H0ZM0 332.0H54.600V336.4H0ZM0 339.0H54.600V342.5H0ZM0 344.9H54.600V349.0H0ZM0 353.0H54.600V363.0H0ZM0 368.0H54.600V381.2H0ZM0 385.9H54.600V391.0H0ZM0 394.0H54.600V397.4H0Z" fill="#000"/></svg>
<div class="t" style="left:585.500px;top:735px;font-size:16px;line-height:16px;color:#1c1c1c;transform-origin:0 0;transform:rotate(-90deg) translate(0,-8.700px) scaleX(1.024);">896444484874/5214743156174448694</div>
<div style="left:585px;top:450px;width:1px;height:284px;background:#9ac400;"></div>
<div style="left:591px;top:450px;width:1px;height:284px;background:#9ac400;"></div>
<div style="left:583px;top:444px;width:11px;height:8px;border:1px solid #9ac400;box-sizing:border-box;background:rgba(255,255,255,0.7);"></div>
<div style="left:582px;top:445px;width:3px;height:6px;border:1px solid #9ac400;border-right:none;box-sizing:border-box;"></div>
<div style="left:583px;top:731px;width:11px;height:8px;border:1px solid #9ac400;box-sizing:border-box;background:rgba(255,255,255,0.7);"></div>
<div style="left:582px;top:732px;width:3px;height:6px;border:1px solid #9ac400;border-right:none;box-sizing:border-box;"></div>
<div style="left:584px;top:587px;width:4px;height:6px;border:1px solid #9ac400;box-sizing:border-box;background:rgba(255,255,255,0.5);"></div>
<div style="left:590px;top:587px;width:4px;height:6px;border:1px solid #9ac400;box-sizing:border-box;background:rgba(255,255,255,0.5);"></div>
<svg style="left:627px;top:390px;" width="1031" height="482" viewBox="0 0 1031 482"><defs><linearGradient id="pt" x1="0" y1="0" x2="0" y2="1"><stop offset="0" stop-color="#242424"/><stop offset="0.150" stop-color="#2b2b2b"/><stop offset="0.700" stop-color="#282828"/><stop offset="1" stop-color="#1b1b1b"/></linearGradient><linearGradient id="wk" x1="0" y1="0" x2="0" y2="1"><stop offset="0" stop-color="#474747"/><stop offset="1" stop-color="#5e5e5e"/></linearGradient><linearGradient id="fg" x1="0" y1="0" x2="1" y2="0"><stop offset="0" stop-color="#8c8c8c"/><stop offset="0.550" stop-color="#7a7a7a"/><stop offset="1" stop-color="#444"/></linearGradient><linearGradient id="fg2" x1="0" y1="0" x2="1" y2="0"><stop offset="0" stop-color="#3a3a3a"/><stop offset="0.350" stop-color="#777"/><stop offset="0.800" stop-color="#6a6a6a"/><stop offset="1" stop-color="#333"/></linearGradient><filter id="bl" filterUnits="userSpaceOnUse" x="0" y="0" width="1031" height="482"><feGaussianBlur stdDeviation="1"/></filter><filter id="bl3" filterUnits="userSpaceOnUse" x="0" y="0" width="1031" height="482"><feGaussianBlur stdDeviation="2.200"/></filter><linearGradient id="mk" x1="0" y1="0" x2="0" y2="1"><stop offset="0" stop-color="#2a2a2a" stop-opacity="0"/><stop offset="0.350" stop-color="#2a2a2a" stop-opacity="0.700"/><stop offset="1" stop-color="#303030" stop-opacity="1"/></linearGradient></defs><rect x="0" y="0" width="1031" height="482" fill="#1b1b1b"/><linearGradient id="ptm" x1="0" y1="0" x2="1" y2="0"><stop offset="0" stop-color="#fff" stop-opacity="0.250"/><stop offset="0.350" stop-color="#fff" stop-opacity="0.450"/><stop offset="0.600" stop-color="#fff" stop-opacity="1"/><stop offset="1" stop-color="#fff" stop-opacity="1"/></linearGradient><mask id="ptmask"><rect x="0" y="0" width="1031" height="26" fill="url(#ptm)"/></mask><rect x="0" y="0" width="1031" height="26" fill="url(#pt)" mask="url(#ptmask)"/><rect x="0" y="24" width="1031" height="2" fill="#161616" mask="url(#ptmask)"/><path d="M104 40L99 166" stroke="#2a2a2a" stroke-width="1.300"/><path d="M158 40L152 166" stroke="#2a2a2a" stroke-width="1.300"/><path d="M238 28L232 170" stroke="#2a2a2a" stroke-width="1.300"/><path d="M291 40L285 170" stroke="#2a2a2a" stroke-width="1.300"/><path d="M372 50L367 166" stroke="#2a2a2a" stroke-width="1.300"/><path d="M426 35L423 160" stroke="#2a2a2a" stroke-width="1.300"/><path d="M478 30L474 160" stroke="#2a2a2a" stroke-width="1.300"/><path d="M559 35L560 155" stroke="#2a2a2a" stroke-width="1.300"/><path d="M616 28L618 170" stroke="#2a2a2a" stroke-width="1.300"/><path d="M697 40L702 185" stroke="#2a2a2a" stroke-width="1.300"/><path d="M751 28L757 188" stroke="#2a2a2a" stroke-width="1.300"/><path d="M804 80L814 186" stroke="#2a2a2a" stroke-width="1.300"/><path d="M887 50L895 187" stroke="#2a2a2a" stroke-width="1.300"/><path d="M944 50L951 187" stroke="#2a2a2a" stroke-width="1.300"/><path d="M1020 70L1025 187" stroke="#2a2a2a" stroke-width="1.300"/><g filter="url(#bl)"><path d="M767.0 176.0L792.0 177.0L796.0 250.0L771.0 250.0Z" fill="url(#wk)"/><path d="M792 177.0L796 250" stroke="#8a8a8a" stroke-width="1"/><path d="M799.0 177.5L838.0 178.5L842.0 250.0L803.0 250.0Z" fill="url(#wk)"/><path d="M838 178.5L842 250" stroke="#8a8a8a" stroke-width="1"/><path d="M845.0 179.0L885.0 180.0L889.0 250.0L849.0 250.0Z" fill="url(#wk)"/><path d="M885 180.0L889 250" stroke="#8a8a8a" stroke-width="1"/><path d="M892.0 180.5L931.0 181.5L935.0 250.0L896.0 250.0Z" fill="url(#wk)"/><path d="M931 181.5L935 250" stroke="#8a8a8a" stroke-width="1"/><path d="M938.0 182.0L977.0 183.0L981.0 250.0L942.0 250.0Z" fill="url(#wk)"/><path d="M977 183.0L981 250" stroke="#8a8a8a" stroke-width="1"/><path d="M984.0 183.5L1022.0 184.5L1026.0 250.0L988.0 250.0Z" fill="url(#wk)"/><path d="M1022 184.5L1026 250" stroke="#8a8a8a" stroke-width="1"/><path d="M1029.0 185.0L1068.0 186.0L1072.0 250.0L1033.0 250.0Z" fill="url(#wk)"/><path d="M1068 186.0L1072 250" stroke="#8a8a8a" stroke-width="1"/><path d="M703.0 150.0L757.0 150.0L759.0 185.0L705.0 185.0Z" fill="#1a1a1a"/><path d="M753 40L759 185" stroke="#2c2c2c" stroke-width="1.300"/><path d="M759.0 150.0L812.0 150.0L814.0 187.0L761.0 187.0Z" fill="#1a1a1a"/><path d="M808 40L814 187" stroke="#2c2c2c" stroke-width="1.300"/><path d="M839.0 150.0L893.0 150.0L895.0 186.0L841.0 186.0Z" fill="#1a1a1a"/><path d="M889 40L895 186" stroke="#2c2c2c" stroke-width="1.300"/><path d="M894.0 150.0L950.0 150.0L952.0 187.0L896.0 187.0Z" fill="#1a1a1a"/><path d="M946 40L952 187" stroke="#2c2c2c" stroke-width="1.300"/><path d="M980.0 150.0L1033.0 150.0L1035.0 186.0L982.0 186.0Z" fill="#1a1a1a"/><path d="M1029 40L1035 186" stroke="#2c2c2c" stroke-width="1.300"/></g><g filter="url(#bl3)"><rect x="318" y="176" width="41" height="80" fill="url(#mk)" opacity="0.75"/><rect x="364" y="176" width="41" height="80" fill="url(#mk)" opacity="0.79"/><rect x="410" y="176" width="41" height="80" fill="url(#mk)" opacity="0.83"/><rect x="456" y="176" width="41" height="80" fill="url(#mk)" opacity="0.87"/><rect x="502" y="176" width="41" height="80" fill="url(#mk)" opacity="0.91"/><rect x="548" y="176" width="41" height="80" fill="url(#mk)" opacity="0.95"/><rect x="594" y="176" width="41" height="80" fill="url(#mk)" opacity="0.99"/></g><g filter="url(#bl)"><linearGradient id="f1247" gradientUnits="userSpaceOnUse" x1="605.0" y1="0" x2="658.0" y2="0"><stop offset="0" stop-color="#2a2a2a"/><stop offset="0.450" stop-color="#7a7a7a"/><stop offset="1" stop-color="#4a4a4a"/></linearGradient><path d="M620 189.0L643 260" stroke="url(#f1247)" stroke-width="30" stroke-linecap="round" fill="none"/><linearGradient id="f1293" gradientUnits="userSpaceOnUse" x1="652.5" y1="0" x2="696.5" y2="0"><stop offset="0" stop-color="#888"/><stop offset="0.450" stop-color="#7c7c7c"/><stop offset="1" stop-color="#3a3a3a"/></linearGradient><path d="M666 163.5L683 260" stroke="url(#f1293)" stroke-width="27" stroke-linecap="round" fill="none"/><linearGradient id="f1334" gradientUnits="userSpaceOnUse" x1="691.0" y1="0" x2="733.0" y2="0"><stop offset="0" stop-color="#868686"/><stop offset="0.450" stop-color="#767676"/><stop offset="1" stop-color="#383838"/></linearGradient><path d="M707 177.0L717 260" stroke="url(#f1334)" stroke-width="32" stroke-linecap="round" fill="none"/><linearGradient id="f1375" gradientUnits="userSpaceOnUse" x1="730.0" y1="0" x2="771.0" y2="0"><stop offset="0" stop-color="#6a6a6a"/><stop offset="0.450" stop-color="#767676"/><stop offset="1" stop-color="#3a3a3a"/></linearGradient><path d="M748 199.0L753 260" stroke="url(#f1375)" stroke-width="36" stroke-linecap="round" fill="none"/></g><g filter="url(#bl)"><linearGradient id="f794" gradientUnits="userSpaceOnUse" x1="158.0" y1="0" x2="178.0" y2="0"><stop offset="0" stop-color="#1c1c1c"/><stop offset="0.450" stop-color="#222"/><stop offset="1" stop-color="#1c1c1c"/></linearGradient><path d="M167 191.0L169 260" stroke="url(#f794)" stroke-width="18" stroke-linecap="round" fill="none"/><linearGradient id="f868" gradientUnits="userSpaceOnUse" x1="207.0" y1="0" x2="259.0" y2="0"><stop offset="0" stop-color="#262626"/><stop offset="0.450" stop-color="#777"/><stop offset="1" stop-color="#5a5a5a"/></linearGradient><path d="M241 183.0L225 260" stroke="url(#f868)" stroke-width="36" stroke-linecap="round" fill="none"/><linearGradient id="f914" gradientUnits="userSpaceOnUse" x1="253.0" y1="0" x2="307.0" y2="0"><stop offset="0" stop-color="#303030"/><stop offset="0.450" stop-color="#7a7a7a"/><stop offset="1" stop-color="#4a4a4a"/></linearGradient><path d="M287 196.0L273 260" stroke="url(#f914)" stroke-width="40" stroke-linecap="round" fill="none"/></g><g filter="url(#bl)"><rect x="52" y="231" width="27" height="27" fill="#2a2a2a"/><rect x="78" y="231" width="1.500" height="28" fill="#8a8a8a"/><rect x="83" y="232" width="26" height="27" fill="#303030"/><rect x="143" y="231" width="5" height="27" fill="#6a6a6a"/><rect x="148" y="231" width="10" height="26" fill="#222"/></g></svg>
<div style="left:1667px;top:104px;width:212px;height:4px;background:linear-gradient(#3e3e3e,#5a5a5a);"></div>
<div style="left:1667px;top:108px;width:212px;height:379px;background:#f0f0f0;"></div>
<div style="left:1667px;top:105px;width:1px;height:382px;background:#5a5a5a;"></div>
<div style="left:1668px;top:108px;width:211px;height:17px;background:linear-gradient(#c4c4c4,#a6a6a6);"></div>
<div style="left:1668px;top:108px;width:58px;height:18px;background:#f0f0f0;"></div>
<svg style="left:1671px;top:112px;" width="7" height="9" viewBox="0 0 7 9"><path d="M3.500 0.500L6 3.500H1ZM3.500 8.500L6 5.500H1Z" fill="#222"/></svg>
<div class="t" style="left:1681.00px;top:108.50px;line-height:16px;font-size:10.5px;color:#333;transform:scaleX(0.8438);transform-origin:left center;font-weight:bold;">Ebenen</div>
<div class="t" style="left:1732.00px;top:108.50px;line-height:16px;font-size:10.5px;color:#555;transform:scaleX(0.9203);transform-origin:left center;font-weight:bold;">Seiten</div>
<div class="t" style="left:1767.00px;top:108.50px;line-height:16px;font-size:10.5px;color:#555;transform:scaleX(0.9349);transform-origin:left center;font-weight:bold;">Verknüpfu</div>
<div style="left:1761px;top:108px;width:1px;height:17px;background:#8a8a8a;"></div>
<div style="left:1762px;top:108px;width:1px;height:17px;background:#c8c8c8;"></div>
<div style="left:1815px;top:108px;width:1px;height:17px;background:#8a8a8a;"></div>
<div style="left:1816px;top:108px;width:1px;height:17px;background:#c0c0c0;"></div>
<svg style="left:1838px;top:112px;" width="11" height="9" viewBox="0 0 11 9"><path d="M0 0.500L4.500 4.500L0 8.500ZM5.500 0.500L10 4.500L5.500 8.500Z" fill="#333"/></svg>
<div style="left:1856px;top:110px;width:1px;height:13px;background:#666;"></div>
<svg style="left:1861px;top:112px;" width="15" height="9" viewBox="0 0 15 9"><path d="M0 2.500h5L2.500 5.500z" fill="#222"/><path d="M6.500 1.500h8M6.500 4.500h8M6.500 7.500h8" stroke="#222" stroke-width="1.300"/></svg>
<div style="left:1668px;top:127px;width:193px;height:18px;background:#f4f4f4;"></div>
<div style="left:1668px;top:145px;width:193px;height:1px;background:#fdfdfd;"></div>
<div style="left:1670px;top:128px;width:18px;height:16px;background:#fafafa;border:1px solid #dcdcdc;box-sizing:border-box;"></div>
<div style="left:1690px;top:128px;width:16px;height:16px;background:#fafafa;border:1px solid #dcdcdc;box-sizing:border-box;"></div>
<svg style="left:1672.5px;top:131px;" width="13" height="10" viewBox="0 0 13 10"><path d="M0.500 5.500C3 1.500 10 1.500 12.500 5.500C10 9 3 9 0.500 5.500Z" fill="#fff" stroke="#222" stroke-width="1"/><circle cx="6.500" cy="5.300" r="2.600" fill="#222"/><path d="M1 3.500C4 0 9 0 12 3.500" fill="none" stroke="#222" stroke-width="1.400"/></svg>
<div style="left:1708px;top:127px;width:4px;height:18px;background:#99cc00;"></div>
<div style="left:1713px;top:126px;width:1px;height:20px;background:#444;"></div>
<div style="left:1714px;top:127px;width:147px;height:18px;background:#3399ff;"></div>
<svg style="left:1716px;top:133.5px;" width="8" height="7" viewBox="0 0 8 7"><path d="M0 0H8L4 6Z" fill="#fff" stroke="#333" stroke-width="0.800"/></svg>
<div class="t" style="left:1726.00px;top:128.50px;line-height:16px;font-size:10px;color:#fff;transform:scaleX(1.0305);transform-origin:left center;font-weight:bold;">Meine Ebene</div>
<div style="left:1848px;top:132px;width:8px;height:8px;background:#99cc00;border:1px solid #222;box-sizing:border-box;"></div>
<div style="left:1668px;top:146px;width:193px;height:18px;background:#f4f4f4;"></div>
<div style="left:1668px;top:164px;width:193px;height:1px;background:#fdfdfd;"></div>
<div style="left:1670px;top:147px;width:18px;height:16px;background:#fafafa;border:1px solid #dcdcdc;box-sizing:border-box;"></div>
<div style="left:1690px;top:147px;width:16px;height:16px;background:#fafafa;border:1px solid #dcdcdc;box-sizing:border-box;"></div>
<svg style="left:1672.5px;top:150px;" width="13" height="10" viewBox="0 0 13 10"><path d="M0.500 5.500C3 1.500 10 1.500 12.500 5.500C10 9 3 9 0.500 5.500Z" fill="#fff" stroke="#222" stroke-width="1"/><circle cx="6.500" cy="5.300" r="2.600" fill="#222"/><path d="M1 3.500C4 0 9 0 12 3.500" fill="none" stroke="#222" stroke-width="1.400"/></svg>
<div style="left:1708px;top:146px;width:4px;height:18px;background:#99cc00;"></div>
<div style="left:1713px;top:145px;width:1px;height:20px;background:#444;"></div>
<div class="t" style="left:1738.00px;top:147.50px;line-height:16px;font-size:10px;color:#111;transform:scaleX(0.9482);transform-origin:left center;">&lt;896444484...444869...&gt;</div>
<div style="left:1848px;top:151px;width:8px;height:8px;background:#99cc00;border:1px solid #222;box-sizing:border-box;"></div>
<div style="left:1668px;top:165px;width:193px;height:18px;background:#f4f4f4;"></div>
<div style="left:1668px;top:183px;width:193px;height:1px;background:#fdfdfd;"></div>
<div style="left:1670px;top:166px;width:18px;height:16px;background:#fafafa;border:1px solid #dcdcdc;box-sizing:border-box;"></div>
<div style="left:1690px;top:166px;width:16px;height:16px;background:#fafafa;border:1px solid #dcdcdc;box-sizing:border-box;"></div>
<svg style="left:1672.5px;top:169px;" width="13" height="10" viewBox="0 0 13 10"><path d="M0.500 5.500C3 1.500 10 1.500 12.500 5.500C10 9 3 9 0.500 5.500Z" fill="#fff" stroke="#222" stroke-width="1"/><circle cx="6.500" cy="5.300" r="2.600" fill="#222"/><path d="M1 3.500C4 0 9 0 12 3.500" fill="none" stroke="#222" stroke-width="1.400"/></svg>
<div style="left:1708px;top:165px;width:4px;height:18px;background:#99cc00;"></div>
<div style="left:1713px;top:164px;width:1px;height:20px;background:#444;"></div>
<div class="t" style="left:1738.00px;top:166.50px;line-height:16px;font-size:10px;color:#111;transform:scaleX(0.8591);transform-origin:left center;">Barcode</div>
<div style="left:1848px;top:170px;width:8px;height:8px;border:1px solid #cfcfcf;box-sizing:border-box;background:#f8f8f8;"></div>
<div style="left:1668px;top:184px;width:193px;height:18px;background:#f4f4f4;"></div>
<div style="left:1668px;top:202px;width:193px;height:1px;background:#fdfdfd;"></div>
<div style="left:1670px;top:185px;width:18px;height:16px;background:#fafafa;border:1px solid #dcdcdc;box-sizing:border-box;"></div>
<div style="left:1690px;top:185px;width:16px;height:16px;background:#fafafa;border:1px solid #dcdcdc;box-sizing:border-box;"></div>
<svg style="left:1672.5px;top:188px;" width="13" height="10" viewBox="0 0 13 10"><path d="M0.500 5.500C3 1.500 10 1.500 12.500 5.500C10 9 3 9 0.500 5.500Z" fill="#fff" stroke="#222" stroke-width="1"/><circle cx="6.500" cy="5.300" r="2.600" fill="#222"/><path d="M1 3.500C4 0 9 0 12 3.500" fill="none" stroke="#222" stroke-width="1.400"/></svg>
<svg style="left:1692px;top:186px;" width="12" height="14" viewBox="0 0 12 14"><path d="M3 6V4A3 3 0 0 1 9 4V6" fill="none" stroke="#222" stroke-width="1.600"/><rect x="1" y="6" width="10" height="7" fill="#333"/><rect x="5" y="8" width="2" height="3" fill="#ddd"/></svg>
<div style="left:1708px;top:184px;width:4px;height:18px;background:#99cc00;"></div>
<div style="left:1713px;top:183px;width:1px;height:20px;background:#444;"></div>
<div class="t" style="left:1738.00px;top:185.50px;line-height:16px;font-size:10px;color:#111;transform:scaleX(0.8930);transform-origin:left center;">weißes Rechteck</div>
<div style="left:1848px;top:189px;width:8px;height:8px;border:1px solid #cfcfcf;box-sizing:border-box;background:#f8f8f8;"></div>
<div style="left:1668px;top:203px;width:193px;height:18px;background:#f4f4f4;"></div>
<div style="left:1668px;top:221px;width:193px;height:1px;background:#fdfdfd;"></div>
<div style="left:1670px;top:204px;width:18px;height:16px;background:#fafafa;border:1px solid #dcdcdc;box-sizing:border-box;"></div>
<div style="left:1690px;top:204px;width:16px;height:16px;background:#fafafa;border:1px solid #dcdcdc;box-sizing:border-box;"></div>
<svg style="left:1672.5px;top:207px;" width="13" height="10" viewBox="0 0 13 10"><path d="M0.500 5.500C3 1.500 10 1.500 12.500 5.500C10 9 3 9 0.500 5.500Z" fill="#fff" stroke="#222" stroke-width="1"/><circle cx="6.500" cy="5.300" r="2.600" fill="#222"/><path d="M1 3.500C4 0 9 0 12 3.500" fill="none" stroke="#222" stroke-width="1.400"/></svg>
<svg style="left:1692px;top:205px;" width="12" height="14" viewBox="0 0 12 14"><path d="M3 6V4A3 3 0 0 1 9 4V6" fill="none" stroke="#222" stroke-width="1.600"/><rect x="1" y="6" width="10" height="7" fill="#333"/><rect x="5" y="8" width="2" height="3" fill="#ddd"/></svg>
<div style="left:1708px;top:203px;width:4px;height:18px;background:#99cc00;"></div>
<div style="left:1713px;top:202px;width:1px;height:20px;background:#444;"></div>
<div class="t" style="left:1738.00px;top:204.50px;line-height:16px;font-size:10px;color:#111;transform:scaleX(0.8892);transform-origin:left center;">blaues Rechteck oben</div>
<div style="left:1848px;top:208px;width:8px;height:8px;border:1px solid #cfcfcf;box-sizing:border-box;background:#f8f8f8;"></div>
<div style="left:1668px;top:222px;width:193px;height:18px;background:#f4f4f4;"></div>
<div style="left:1668px;top:240px;width:193px;height:1px;background:#fdfdfd;"></div>
<div style="left:1670px;top:223px;width:18px;height:16px;background:#fafafa;border:1px solid #dcdcdc;box-sizing:border-box;"></div>
<div style="left:1690px;top:223px;width:16px;height:16px;background:#fafafa;border:1px solid #dcdcdc;box-sizing:border-box;"></div>
<svg style="left:1672.5px;top:226px;" width="13" height="10" viewBox="0 0 13 10"><path d="M0.500 5.500C3 1.500 10 1.500 12.500 5.500C10 9 3 9 0.500 5.500Z" fill="#fff" stroke="#222" stroke-width="1"/><circle cx="6.500" cy="5.300" r="2.600" fill="#222"/><path d="M1 3.500C4 0 9 0 12 3.500" fill="none" stroke="#222" stroke-width="1.400"/></svg>
<svg style="left:1692px;top:224px;" width="12" height="14" viewBox="0 0 12 14"><path d="M3 6V4A3 3 0 0 1 9 4V6" fill="none" stroke="#222" stroke-width="1.600"/><rect x="1" y="6" width="10" height="7" fill="#333"/><rect x="5" y="8" width="2" height="3" fill="#ddd"/></svg>
<div style="left:1708px;top:222px;width:4px;height:18px;background:#99cc00;"></div>
<div style="left:1713px;top:221px;width:1px;height:20px;background:#444;"></div>
<div class="t" style="left:1738.00px;top:223.50px;line-height:16px;font-size:10px;color:#111;transform:scaleX(0.9573);transform-origin:left center;">&lt;Piano_SW.tif&gt;</div>
<div style="left:1848px;top:227px;width:8px;height:8px;border:1px solid #cfcfcf;box-sizing:border-box;background:#f8f8f8;"></div>
<div style="left:1668px;top:241px;width:193px;height:18px;background:#f4f4f4;"></div>
<div style="left:1668px;top:259px;width:193px;height:1px;background:#fdfdfd;"></div>
<div style="left:1670px;top:242px;width:18px;height:16px;background:#fafafa;border:1px solid #dcdcdc;box-sizing:border-box;"></div>
<div style="left:1690px;top:242px;width:16px;height:16px;background:#fafafa;border:1px solid #dcdcdc;box-sizing:border-box;"></div>
<svg style="left:1672.5px;top:245px;" width="13" height="10" viewBox="0 0 13 10"><path d="M0.500 5.500C3 1.500 10 1.500 12.500 5.500C10 9 3 9 0.500 5.500Z" fill="#fff" stroke="#222" stroke-width="1"/><circle cx="6.500" cy="5.300" r="2.600" fill="#222"/><path d="M1 3.500C4 0 9 0 12 3.500" fill="none" stroke="#222" stroke-width="1.400"/></svg>
<svg style="left:1692px;top:243px;" width="12" height="14" viewBox="0 0 12 14"><path d="M3 6V4A3 3 0 0 1 9 4V6" fill="none" stroke="#222" stroke-width="1.600"/><rect x="1" y="6" width="10" height="7" fill="#333"/><rect x="5" y="8" width="2" height="3" fill="#ddd"/></svg>
<div style="left:1708px;top:241px;width:4px;height:18px;background:#ff6600;"></div>
<div style="left:1713px;top:240px;width:1px;height:20px;background:#444;"></div>
<svg style="left:1717px;top:245.5px;" width="7" height="10" viewBox="0 0 7 10"><path d="M0.500 0.500V9.500L5.500 5Z" fill="#fff" stroke="#333" stroke-width="0.900"/></svg>
<div class="t" style="left:1726.00px;top:242.50px;line-height:16px;font-size:10px;color:#111;transform:scaleX(0.9433);transform-origin:left center;">Vorlage</div>
<div style="left:1848px;top:246px;width:8px;height:8px;border:1px solid #cfcfcf;box-sizing:border-box;background:#f8f8f8;"></div>
<svg style="left:1834px;top:129px;" width="9" height="14" viewBox="0 0 9 14"><path d="M4.500 0.500L8 8L6.500 11H2.500L1 8Z" fill="#fff" stroke="#111"/><path d="M4.500 2V8" stroke="#111"/><rect x="2" y="11.500" width="5" height="2.500" fill="#111"/></svg>
<div style="left:1861px;top:126px;width:17px;height:341px;background:#f0f0f0;border-left:1px solid #e0e0e0;box-sizing:border-box;"></div>
<svg style="left:1866.5px;top:134.0px;" width="7" height="4" viewBox="0 0 7 4"><path d="M0 4H7L3.5 0Z" fill="#b8a8a8"/></svg>
<svg style="left:1866.5px;top:457.5px;" width="7" height="4" viewBox="0 0 7 4"><path d="M0 0H7L3.5 4Z" fill="#aaa"/></svg>
<div style="left:1668px;top:467px;width:211px;height:1px;background:#d0d0d0;"></div>
<div class="t" style="left:1674.00px;top:469.00px;line-height:16px;font-size:10px;color:#111;transform:scaleX(0.9477);transform-origin:left center;">Seite: 1, 2 Ebenen</div>
<svg style="left:1811px;top:471px;" width="12" height="12" viewBox="0 0 12 12"><rect x="1.500" y="2.500" width="8" height="8" fill="#fff" stroke="#333"/><path d="M5 10.500V6H9.500" fill="#ccc" stroke="#333"/><rect x="5.500" y="6.500" width="4" height="4" fill="#888"/></svg>
<svg style="left:1842px;top:470px;" width="11" height="14" viewBox="0 0 11 14"><path d="M1.500 4H9.500L8.500 13H2.500Z" fill="#eee" stroke="#222"/><path d="M0.500 3.500H10.500M4 3V1.500H7V3M4 6V11M5.500 6V11M7 6V11" stroke="#222" fill="none"/></svg>
<div style="left:1867px;top:476px;width:11px;height:11px;background-image:conic-gradient(#9c9c9c 25%,transparent 0);background-size:2px 2px;clip-path:polygon(100% 0,100% 100%,0 100%);"></div>
<div style="left:1667px;top:487px;width:212px;height:1px;background:#555;"></div>
<div style="left:1665px;top:143px;width:201px;height:26px;border:5px solid #fe0000;box-sizing:border-box;border-radius:2px;"></div>
<div style="left:1661px;top:490px;width:212px;height:275px;background:#f0f0f0;border:1px solid #555;box-sizing:border-box;"></div>
<div style="left:1661px;top:490px;width:212px;height:12px;background:linear-gradient(#3c3c3c,#5c5c5c);border-radius:3px 3px 0 0;"></div>
<svg style="left:1847px;top:492px;" width="9" height="8" viewBox="0 0 9 8"><path d="M4 0.500L0 4L4 7.500ZM8.500 0.500L4.500 4L8.500 7.500Z" fill="#d8d8d8"/></svg>
<div style="left:1858px;top:492px;width:1px;height:8px;background:#888;"></div>
<svg style="left:1862px;top:492px;" width="8" height="8" viewBox="0 0 8 8"><path d="M1 1L7 7M7 1L1 7" stroke="#e0e0e0" stroke-width="1.600"/></svg>
<div style="left:1662px;top:502px;width:210px;height:19px;background:linear-gradient(#b8b8b8,#9c9c9c);"></div>
<div style="left:1662px;top:502px;width:98px;height:20px;background:#f0f0f0;"></div>
<svg style="left:1664px;top:507px;" width="7" height="9" viewBox="0 0 7 9"><path d="M3.500 0.500L6 3.500H1ZM3.500 8.500L6 5.500H1Z" fill="#222"/></svg>
<div class="t" style="left:1673.00px;top:503.50px;line-height:16px;font-size:10.5px;color:#222;transform:scaleX(0.9337);transform-origin:left center;font-weight:bold;">Zeichenformate</div>
<svg style="left:1854px;top:507px;" width="15" height="9" viewBox="0 0 15 9"><path d="M0 2.500h5L2.500 5.500z" fill="#222"/><path d="M6.500 1.500h8M6.500 4.500h8M6.500 7.500h8" stroke="#222" stroke-width="1.300"/></svg>
<div class="t" style="left:1665.50px;top:523.00px;line-height:16px;font-size:10px;color:#111;transform:scaleX(0.9527);transform-origin:left center;">Helvetica klein+</div>
<svg style="left:1858px;top:524px;" width="10" height="15" viewBox="0 0 10 15"><path d="M6.500 0.500L1.500 8.500H4.500L2.500 14.500L8.500 6H5.500Z" fill="#444"/></svg>
<div style="left:1663px;top:542px;width:192px;height:1px;background:#c8c8c8;"></div>
<div class="t" style="left:1695.00px;top:545.00px;line-height:16px;font-size:10px;color:#111;transform:scaleX(0.9658);transform-origin:left center;">[Ohne]</div>
<svg style="left:1841px;top:546px;" width="11" height="13" viewBox="0 0 11 13"><path d="M5 1L8.500 7L7 10H3L1.500 7Z" fill="#fff" stroke="#111" stroke-width="0.900"/><rect x="2.500" y="10.500" width="5" height="2" fill="#111"/><path d="M1 2L10 12M10 2L1 12" stroke="#e01020" stroke-width="1.200"/></svg>
<div style="left:1663px;top:563px;width:190px;height:19px;background:#3399ff;"></div>
<div class="t" style="left:1695.00px;top:564.50px;line-height:16px;font-size:10px;color:#fff;transform:scaleX(1.0619);transform-origin:left center;font-weight:bold;">Helvetica klein+</div>
<div class="t" style="left:1695.00px;top:584.50px;line-height:16px;font-size:10px;color:#111;transform:scaleX(0.9305);transform-origin:left center;">Helvetica groß</div>
<div style="left:1857px;top:543px;width:1px;height:198px;background:#dcdcdc;"></div>
<svg style="left:1860.0px;top:550.0px;" width="7" height="4" viewBox="0 0 7 4"><path d="M0 4H7L3.5 0Z" fill="#aaa"/></svg>
<svg style="left:1860.0px;top:732.5px;" width="7" height="4" viewBox="0 0 7 4"><path d="M0 0H7L3.5 4Z" fill="#aaa"/></svg>
<div style="left:1663px;top:741px;width:192px;height:1px;background:#c8c8c8;"></div>
<svg style="left:1773px;top:745px;" width="11" height="11" viewBox="0 0 11 11"><path d="M0.500 9V1.500H4L5 2.500H10.500V9Z" fill="#e0e0e0" stroke="#b0b0b0"/><path d="M0.500 9.500H10.500" stroke="#222" stroke-width="1.200"/></svg>
<div style="left:1795px;top:744px;width:30px;height:13px;border:1px solid #b4b4b4;border-radius:4px;box-sizing:border-box;background:linear-gradient(#e4e4e4,#f2f2f2);"></div>
<svg style="left:1805px;top:745px;" width="11" height="11" viewBox="0 0 11 11"><rect x="0.500" y="0.500" width="9" height="9" fill="#f4faf8" stroke="#678"/><path d="M9.500 0.500V9.500H0.500" fill="none" stroke="#123" stroke-width="1.600"/><path d="M3 5H7V9H6V6.500H3Z" fill="#2a5a55"/></svg>
<svg style="left:1835.5px;top:745px;" width="10" height="12" viewBox="0 0 11 14"><path d="M1.500 4H9.500L8.500 13H2.500Z" fill="#eee" stroke="#222"/><path d="M0.500 3.500H10.500M4 3V1.500H7V3M4 6V11M5.500 6V11M7 6V11" stroke="#222" fill="none"/></svg>
<div style="left:1859px;top:748px;width:11px;height:11px;background-image:conic-gradient(#9c9c9c 25%,transparent 0);background-size:2px 2px;clip-path:polygon(100% 0,100% 100%,0 100%);"></div>
<div style="left:1655px;top:498px;width:107px;height:26px;border:5px solid #fe0000;box-sizing:border-box;border-radius:2px;"></div>
<div style="left:1658px;top:560px;width:199px;height:45px;border:5px solid #fe0000;box-sizing:border-box;border-radius:2px;"></div>
<div style="left:1782px;top:737px;width:52px;height:30px;border:5px solid #fe0000;box-sizing:border-box;border-radius:2px;"></div>
<div style="left:1789px;top:770px;width:127px;height:20px;background:#ffffe1;border:1px solid #5a5a5a;box-sizing:border-box;"></div>
<div class="t" style="left:1793.50px;top:772.50px;line-height:16px;font-size:12px;color:#000;transform:scaleX(0.9461);transform-origin:left center;">Neues Format erstellen</div>
<div style="left:835px;top:627px;width:824px;height:406px;border-radius:7px 7px 6px 6px;border:1px solid #161616;box-sizing:border-box;overflow:hidden;background:linear-gradient(90deg,#242424 0%,#272727 28%,#2e2e2e 38%,#3c3c3c 47%,#4e4e4e 53%,#3e3e3e 57%,#505050 62%,#444 66%,#585858 71%,#646464 84%,#787878 94%,#868686 100%);"><div style="left:0;top:27px;width:7px;height:380px;background:linear-gradient(#2a2a2a 0px,#333 58px,#555 68px,#c4c4c4 89px,#c8c8c8 91px,#3a3a3a 92px,#2c2c2c 200px,#2a2a2a 208px,#8a8a8a 216px,#b6b6b6 224px,#b8b8b8 380px);"></div><div style="left:816px;top:0px;width:7px;height:407px;background:linear-gradient(#7a7a7a 0px,#8a8a8a 40px,#b0b0b0 100px,#d0d0d0 118px,#c8c8c8 128px,#333 132px,#2c2c2c 300px,#333 315px,#9a9a9a 328px,#adadad 340px,#b0b0b0 407px);"></div><div style="left:0;top:399px;width:823px;height:7px;background:linear-gradient(#a0a0a0,#b6b6b6 60%,#8a8a8a);"></div><div style="left:0;top:0;width:822px;height:1px;background:rgba(255,255,255,0.35);"></div><div style="left:0;top:1px;width:1px;height:404px;background:rgba(255,255,255,0.30);"></div><div style="left:821px;top:1px;width:1px;height:404px;background:rgba(255,255,255,0.30);"></div></div>
<div style="left:836px;top:628px;width:175px;height:27px;background:radial-gradient(ellipse 50% 60% at 42% 50%,rgba(215,215,215,0.88) 0%,rgba(200,200,200,0.75) 50%,rgba(160,160,160,0.40) 75%,rgba(100,100,100,0) 100%);"></div>
<div class="t" style="left:842.00px;top:632.50px;line-height:16px;font-size:12px;color:#111;transform:scaleX(1.0184);transform-origin:left center;">Zeichenformatoptionen</div>
<div style="left:841px;top:655px;width:812px;height:372px;background:#f0f0f0;border:1px solid #3a3a3a;box-sizing:border-box;box-shadow:inset 0 0 0 1px #fcfcfc;"></div>
<div style="left:858px;top:672px;width:195px;height:297px;border:1px solid #bbb;box-sizing:border-box;background:#f0f0f0;"></div>
<div style="left:859px;top:672px;width:194px;height:297px;border:1px solid #1a1a1a;box-sizing:border-box;background:#f2f2f2;"></div>
<div class="t" style="left:863.00px;top:673.50px;line-height:16px;font-size:10px;color:#111;transform:scaleX(0.9336);transform-origin:left center;">Allgemein</div>
<div style="left:860px;top:691px;width:192px;height:17px;background:#3399ff;"></div>
<div class="t" style="left:863.00px;top:691.50px;line-height:16px;font-size:10px;color:#fff;transform:scaleX(1.0341);transform-origin:left center;font-weight:bold;">Grundlegende Zeichenformate</div>
<div class="t" style="left:863.00px;top:709.50px;line-height:16px;font-size:10px;color:#111;transform:scaleX(0.9293);transform-origin:left center;">Erweiterte Zeichenformate</div>
<div style="left:860px;top:708px;width:192px;height:1px;background:#fafafa;"></div>
<div class="t" style="left:863.00px;top:727.50px;line-height:16px;font-size:10px;color:#111;transform:scaleX(0.8907);transform-origin:left center;">Zeichenfarbe</div>
<div style="left:860px;top:726px;width:192px;height:1px;background:#fafafa;"></div>
<div class="t" style="left:863.00px;top:745.50px;line-height:16px;font-size:10px;color:#111;transform:scaleX(0.9498);transform-origin:left center;">OpenType-Funktionen</div>
<div style="left:860px;top:744px;width:192px;height:1px;background:#fafafa;"></div>
<div class="t" style="left:863.00px;top:763.50px;line-height:16px;font-size:10px;color:#111;transform:scaleX(0.9037);transform-origin:left center;">Unterstreichungsoptionen</div>
<div style="left:860px;top:762px;width:192px;height:1px;background:#fafafa;"></div>
<div class="t" style="left:863.00px;top:781.50px;line-height:16px;font-size:10px;color:#111;transform:scaleX(0.8950);transform-origin:left center;">Durchstreichungsoptionen</div>
<div style="left:860px;top:780px;width:192px;height:1px;background:#fafafa;"></div>
<div class="t" style="left:863.00px;top:799.50px;line-height:16px;font-size:10px;color:#111;transform:scaleX(0.9198);transform-origin:left center;">Tagsexport</div>
<div style="left:860px;top:798px;width:192px;height:1px;background:#fafafa;"></div>
<div style="left:860px;top:816px;width:192px;height:1px;background:#1a1a1a;"></div>
<div style="left:1053px;top:672px;width:18px;height:297px;background:#f4f4f4;border:1px solid #e0e0e0;box-sizing:border-box;"></div>
<svg style="left:1058.0px;top:679.5px;" width="7" height="4" viewBox="0 0 7 4"><path d="M0 4H7L3.5 0Z" fill="#aaa"/></svg>
<svg style="left:1058.0px;top:958.5px;" width="7" height="4" viewBox="0 0 7 4"><path d="M0 0H7L3.5 4Z" fill="#aaa"/></svg>
<div class="t" style="left:1145.64px;top:672.00px;line-height:16px;font-size:12px;color:#0c0c0c;transform:scaleX(1.0090);transform-origin:right center;">Formatname:</div>
<div style="left:1164px;top:685.5px;width:8px;height:1px;background:#222;"></div>
<div style="left:1222px;top:669px;width:305px;height:22px;background:#fff;border:1px solid #a8a8a8;box-sizing:border-box;"></div>
<div class="t" style="left:1225.00px;top:671.50px;line-height:16px;font-size:12px;color:#111;transform:scaleX(0.9823);transform-origin:left center;">Helvetica klein</div>
<div class="t" style="left:1180.56px;top:693.00px;line-height:16px;font-size:9.5px;color:#0c0c0c;transform:scaleX(0.9332);transform-origin:right center;">Position:</div>
<div class="t" style="left:1087.50px;top:707.50px;line-height:16px;font-size:12px;color:#0c0c0c;transform:scaleX(1.0199);transform-origin:left center;">Grundlegende Zeichenformate</div>
<div style="left:1087px;top:724px;width:550px;height:1px;background:#9c9c9c;"></div>
<div style="left:1087px;top:725px;width:550px;height:1px;background:#fcfcfc;"></div>
<div class="t" style="left:1184.98px;top:742.50px;line-height:16px;font-size:12px;color:#0c0c0c;transform:scaleX(0.9859);transform-origin:right center;">Schriftfamilie:</div>
<div style="left:1199px;top:756.0px;width:6px;height:1px;background:#222;"></div>
<div style="left:1263px;top:740px;width:260px;height:22px;background:#fff;border:1px solid #d8d8d8;border-top-color:#c4c4c4;box-sizing:border-box;"></div>
<div class="t" style="left:1271.00px;top:743.00px;line-height:16px;font-size:12px;color:#111;transform:scaleX(0.9928);transform-origin:left center;">Helvetica</div>
<svg style="left:1510.0px;top:749.25px;" width="8" height="4.5" viewBox="0 0 8 4.5"><path d="M0 0H8L4.0 4.5Z" fill="#000"/></svg>
<div class="t" style="left:1184.98px;top:768.00px;line-height:16px;font-size:12px;color:#0c0c0c;transform:scaleX(1.0552);transform-origin:right center;">Schriftschnitt:</div>
<div style="left:1181px;top:781.5px;width:7px;height:1px;background:#222;"></div>
<div style="left:1263px;top:765px;width:260px;height:22px;background:#fff;border:1px solid #d8d8d8;border-top-color:#c4c4c4;box-sizing:border-box;"></div>
<div class="t" style="left:1271.00px;top:768.50px;line-height:16px;font-size:12px;color:#111;transform:scaleX(0.9518);transform-origin:left center;">Regular</div>
<svg style="left:1510.0px;top:774.25px;" width="8" height="4.5" viewBox="0 0 8 4.5"><path d="M0 0H8L4.0 4.5Z" fill="#000"/></svg>
<div class="t" style="left:1195.64px;top:792.50px;line-height:16px;font-size:12px;color:#0c0c0c;transform:scaleX(1.0267);transform-origin:right center;">Schriftgrad:</div>
<div style="left:1220px;top:806.0px;width:4px;height:1px;background:#222;"></div>
<div style="left:1264px;top:791.0px;width:11px;height:10.0px;background:linear-gradient(#fdfdfd,#e8e8e8);border:1px solid #c2c2c2;box-sizing:border-box;border-radius:1px;"></div>
<div style="left:1264px;top:801.5px;width:11px;height:10.0px;background:linear-gradient(#fdfdfd,#e8e8e8);border:1px solid #c2c2c2;box-sizing:border-box;border-radius:1px;"></div>
<svg style="left:1264px;top:791px;" width="11" height="21" viewBox="0 0 11 21"><path d="M5.5 3.25L8.1 6.55H2.9Z" fill="#7466c2"/><path d="M5.5 17.75L8.1 14.45H2.9Z" fill="#7466c2"/></svg>
<div style="left:1278px;top:790px;width:105px;height:22px;background:#fff;border:1px solid #d8d8d8;border-top-color:#c4c4c4;box-sizing:border-box;"></div>
<div class="t" style="left:1286.00px;top:793.50px;line-height:16px;font-size:12px;color:#111;transform:scaleX(1.0775);transform-origin:left center;">8 Pt</div>
<svg style="left:1370.0px;top:799.25px;" width="8" height="4.5" viewBox="0 0 8 4.5"><path d="M0 0H8L4.0 4.5Z" fill="#000"/></svg>
<div class="t" style="left:1212.30px;top:817.50px;line-height:16px;font-size:12px;color:#0c0c0c;transform:scaleX(1.0068);transform-origin:right center;">Kerning:</div>
<div style="left:1212px;top:831.0px;width:7px;height:1px;background:#222;"></div>
<div style="left:1262px;top:815px;width:121px;height:22px;background:#fff;border:1px solid #d8d8d8;border-top-color:#c4c4c4;box-sizing:border-box;"></div>
<div class="t" style="left:1267.00px;top:817.50px;line-height:16px;font-size:12px;color:#111;transform:scaleX(0.9832);transform-origin:left center;">Optisch</div>
<svg style="left:1370.0px;top:824.25px;" width="8" height="4.5" viewBox="0 0 8 4.5"><path d="M0 0H8L4.0 4.5Z" fill="#000"/></svg>
<div class="t" style="left:1176.28px;top:842.50px;line-height:16px;font-size:12px;color:#0c0c0c;transform:scaleX(1.0283);transform-origin:right center;">Buchstabenart:</div>
<div style="left:1188px;top:856.0px;width:6px;height:1px;background:#222;"></div>
<div style="left:1262px;top:840px;width:121px;height:22px;background:#fff;border:1px solid #d8d8d8;border-top-color:#c4c4c4;box-sizing:border-box;"></div>
<div class="t" style="left:1267.00px;top:842.50px;line-height:16px;font-size:12px;color:#111;transform:scaleX(0.9568);transform-origin:left center;">Normal</div>
<svg style="left:1370.0px;top:849.25px;" width="8" height="4.5" viewBox="0 0 8 4.5"><path d="M0 0H8L4.0 4.5Z" fill="#000"/></svg>
<div class="t" style="left:1438.28px;top:792.50px;line-height:16px;font-size:12px;color:#0c0c0c;transform:scaleX(1.0035);transform-origin:right center;">Zeilenabstand:</div>
<div style="left:1453.5px;top:806.0px;width:3px;height:1px;background:#222;"></div>
<div style="left:1525px;top:791.0px;width:10px;height:10.0px;background:linear-gradient(#fdfdfd,#e8e8e8);border:1px solid #c2c2c2;box-sizing:border-box;border-radius:1px;"></div>
<div style="left:1525px;top:801.5px;width:10px;height:10.0px;background:linear-gradient(#fdfdfd,#e8e8e8);border:1px solid #c2c2c2;box-sizing:border-box;border-radius:1px;"></div>
<svg style="left:1525px;top:791px;" width="10" height="21" viewBox="0 0 10 21"><path d="M5.0 3.25L7.6 6.55H2.4Z" fill="#c4c4c4"/><path d="M5.0 17.75L7.6 14.45H2.4Z" fill="#c4c4c4"/></svg>
<div style="left:1538px;top:790px;width:100px;height:22px;background:#fff;border:1px solid #d8d8d8;border-top-color:#c4c4c4;box-sizing:border-box;"></div>
<svg style="left:1625.0px;top:799.25px;" width="8" height="4.5" viewBox="0 0 8 4.5"><path d="M0 0H8L4.0 4.5Z" fill="#000"/></svg>
<div class="t" style="left:1462.30px;top:817.50px;line-height:16px;font-size:12px;color:#0c0c0c;transform:scaleX(1.0603);transform-origin:right center;">Laufweite:</div>
<div style="left:1501.5px;top:831.0px;width:4px;height:1px;background:#222;"></div>
<div style="left:1525px;top:816.0px;width:10px;height:10.0px;background:linear-gradient(#fdfdfd,#e8e8e8);border:1px solid #c2c2c2;box-sizing:border-box;border-radius:1px;"></div>
<div style="left:1525px;top:826.5px;width:10px;height:10.0px;background:linear-gradient(#fdfdfd,#e8e8e8);border:1px solid #c2c2c2;box-sizing:border-box;border-radius:1px;"></div>
<svg style="left:1525px;top:816px;" width="10" height="21" viewBox="0 0 10 21"><path d="M5.0 3.25L7.6 6.55H2.4Z" fill="#7466c2"/><path d="M5.0 17.75L7.6 14.45H2.4Z" fill="#7466c2"/></svg>
<div style="left:1538px;top:815px;width:100px;height:22px;background:#fff;border:1px solid #d8d8d8;border-top-color:#c4c4c4;box-sizing:border-box;"></div>
<div class="t" style="left:1546.00px;top:818.50px;line-height:16px;font-size:12px;color:#111;">0</div>
<svg style="left:1625.0px;top:824.25px;" width="8" height="4.5" viewBox="0 0 8 4.5"><path d="M0 0H8L4.0 4.5Z" fill="#000"/></svg>
<div class="t" style="left:1470.97px;top:842.50px;line-height:16px;font-size:12px;color:#0c0c0c;transform:scaleX(0.9994);transform-origin:right center;">Position:</div>
<div style="left:1490px;top:856.0px;width:3px;height:1px;background:#222;"></div>
<div style="left:1522px;top:840px;width:116px;height:22px;background:#fff;border:1px solid #d8d8d8;border-top-color:#c4c4c4;box-sizing:border-box;"></div>
<div class="t" style="left:1527.00px;top:842.50px;line-height:16px;font-size:12px;color:#111;transform:scaleX(0.9568);transform-origin:left center;">Normal</div>
<svg style="left:1625.0px;top:849.25px;" width="8" height="4.5" viewBox="0 0 8 4.5"><path d="M0 0H8L4.0 4.5Z" fill="#000"/></svg>
<div style="left:1087px;top:871px;width:550px;height:1px;background:#9c9c9c;"></div>
<div style="left:1087px;top:872px;width:550px;height:1px;background:#fcfcfc;"></div>
<div style="left:1127px;top:894px;width:13px;height:13px;background:linear-gradient(135deg,#dcdcdc,#fafafa);border:1px solid #8e8f8f;box-sizing:border-box;box-shadow:inset 0 0 0 1px #f4f4f4;"></div>
<div class="t" style="left:1143.50px;top:893.50px;line-height:16px;font-size:12px;color:#0c0c0c;transform:scaleX(1.0089);transform-origin:left center;">Unterstrichen</div>
<div style="left:1151px;top:907.0px;width:6px;height:1px;background:#222;"></div>
<div style="left:1127px;top:914px;width:13px;height:13px;background:linear-gradient(135deg,#dcdcdc,#fafafa);border:1px solid #8e8f8f;box-sizing:border-box;box-shadow:inset 0 0 0 1px #f4f4f4;"></div>
<div class="t" style="left:1143.50px;top:913.50px;line-height:16px;font-size:12px;color:#0c0c0c;transform:scaleX(0.9957);transform-origin:left center;">Durchgestrichen</div>
<div style="left:1143.5px;top:927.0px;width:8px;height:1px;background:#222;"></div>
<div style="left:1277px;top:894px;width:13px;height:13px;background:linear-gradient(135deg,#dcdcdc,#fafafa);border:1px solid #8e8f8f;box-sizing:border-box;box-shadow:inset 0 0 0 1px #f4f4f4;"></div>
<div class="t" style="left:1293.00px;top:893.50px;line-height:16px;font-size:12px;color:#0c0c0c;transform:scaleX(0.9992);transform-origin:left center;">Ligaturen</div>
<div style="left:1329px;top:907.0px;width:4px;height:1px;background:#222;"></div>
<div style="left:1427px;top:894px;width:13px;height:13px;background:linear-gradient(135deg,#dcdcdc,#fafafa);border:1px solid #8e8f8f;box-sizing:border-box;box-shadow:inset 0 0 0 1px #f4f4f4;"></div>
<svg style="left:1427px;top:894px;" width="13" height="13" viewBox="0 0 13 13"><path d="M3 6.500L5.500 10L10 2.500" fill="none" stroke="#2a3a9a" stroke-width="1.700"/></svg>
<div class="t" style="left:1443.00px;top:893.50px;line-height:16px;font-size:12px;color:#0c0c0c;transform:scaleX(0.9864);transform-origin:left center;">Kein Umbruch</div>
<div style="left:1488px;top:907.0px;width:7px;height:1px;background:#222;"></div>
<div style="left:857px;top:995px;width:13px;height:13px;background:linear-gradient(135deg,#dcdcdc,#fafafa);border:1px solid #8e8f8f;box-sizing:border-box;box-shadow:inset 0 0 0 1px #f4f4f4;"></div>
<svg style="left:857px;top:995px;" width="13" height="13" viewBox="0 0 13 13"><path d="M3 6.500L5.500 10L10 2.500" fill="none" stroke="#2a3a9a" stroke-width="1.700"/></svg>
<div class="t" style="left:873.00px;top:993.50px;line-height:16px;font-size:12px;color:#0c0c0c;transform:scaleX(0.9793);transform-origin:left center;">Vorschau</div>
<div style="left:873px;top:1007.0px;width:7px;height:1px;background:#222;"></div>
<div style="left:1438px;top:992px;width:93px;height:18px;border:1px solid #2c78b0;border-radius:3px;box-sizing:border-box;background:linear-gradient(#eef8fd,#dcf0fb 48%,#c2e3f7 52%,#aad8f2);box-shadow:inset 0 0 0 1.500px #46c8f4;"></div>
<div class="t" style="left:1484.50px;top:993.50px;line-height:16px;font-size:12px;color:#111;transform:translateX(-50%);">OK</div>
<div style="left:1543px;top:992px;width:93px;height:18px;border:1px solid #707070;border-radius:3px;box-sizing:border-box;background:linear-gradient(#f2f2f2,#ebebeb 48%,#dddddd 52%,#cfcfcf);box-shadow:inset 0 0 0 1px #fcfcfc;"></div>
<div class="t" style="left:1559.00px;top:993.50px;line-height:16px;font-size:12px;color:#111;transform:scaleX(1.0337);transform-origin:left center;">Abbrechen</div>
</body></html>
